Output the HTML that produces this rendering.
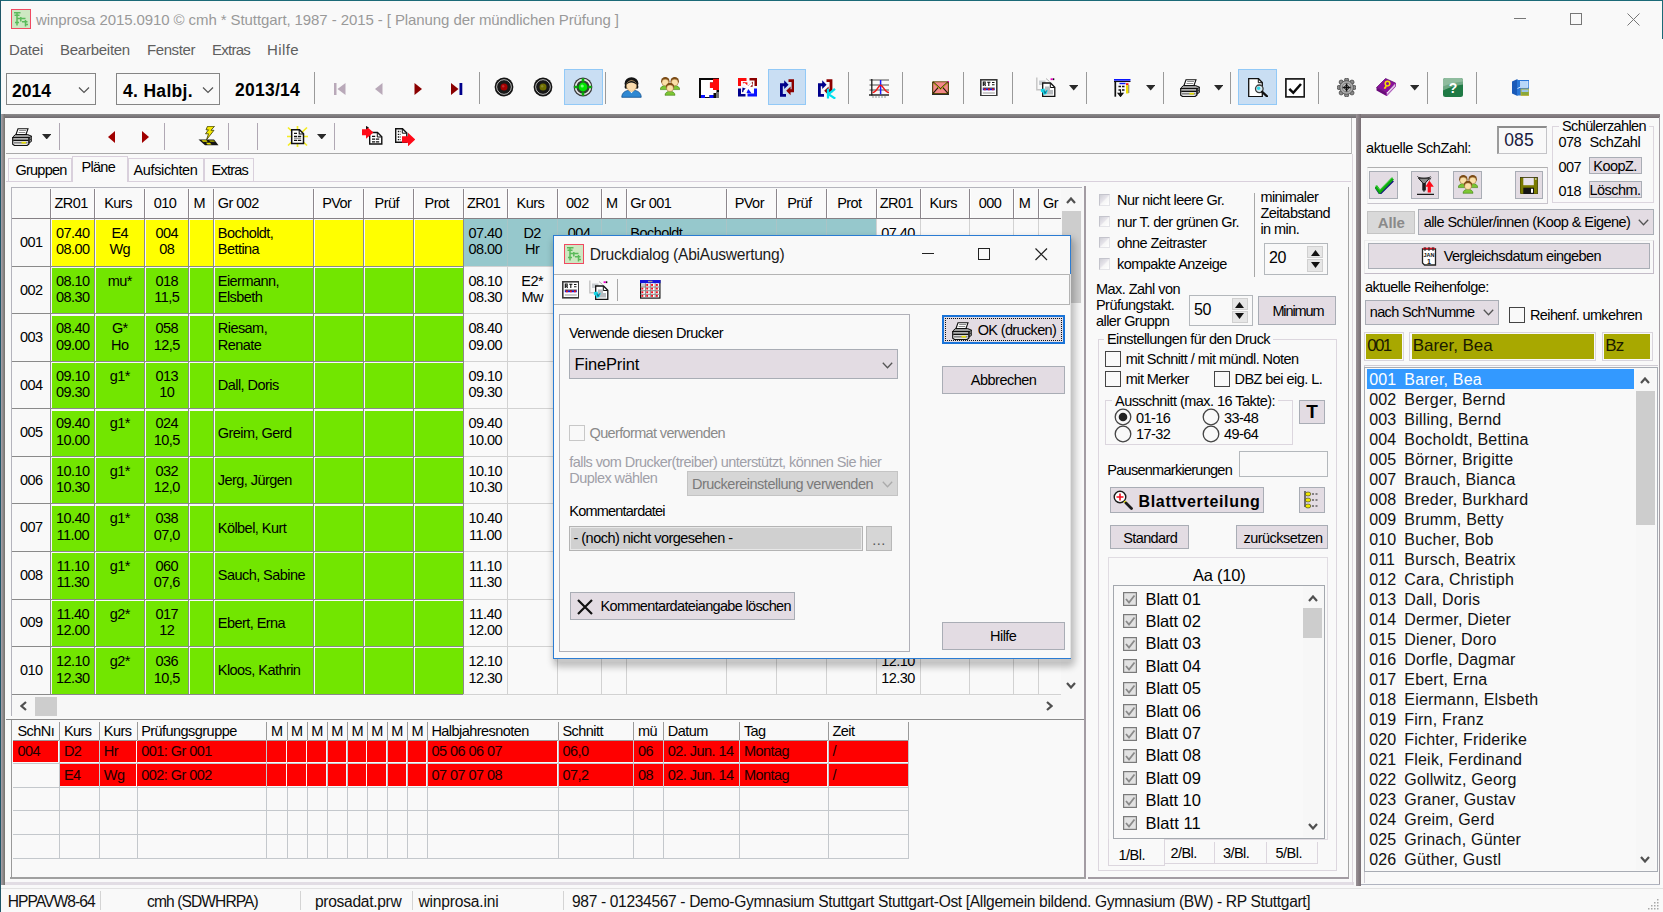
<!DOCTYPE html>
<html lang="de"><head><meta charset="utf-8"><title>winprosa</title>
<style>
html,body{margin:0;padding:0}
body{width:1663px;height:912px;overflow:hidden;background:#f9f9f9;font-family:"Liberation Sans",sans-serif;color:#000;position:relative}
#root{position:absolute;left:0;top:0;width:1663px;height:912px;overflow:hidden;background:#f9f9f9}
#root div,#root svg,#root span.a{position:absolute;box-sizing:border-box}
.t{white-space:nowrap}
.btn{background:#e3dce3;border:1px solid #a9adb5}
.sunk{border:1px solid #a0a0a0;background:#fff}
</style></head>
<body><div id="root">
<!-- chrome -->
<div style="left:0px;top:0px;width:1663px;height:1px;background:#1b6a78"></div>
<div style="left:0px;top:0px;width:1.2px;height:912px;background:#1f5668"></div>
<div style="left:1662px;top:0px;width:1px;height:39px;background:#1b6a78"></div>
<div style="left:1px;top:1px;width:1661px;height:37px;background:#f9f9f9"></div>
<svg style="left:11px;top:9px" width="20" height="20" viewBox="0 0 20 20"><rect x="0.500" y="0.500" width="19" height="19" fill="#cde8c2" stroke="#f04a62" stroke-width="1"/><path d="M3 3.800H9.500M6 3V16.500M3.500 6.200H8.500M5.500 9.500H14.500M9.800 8V12.500M11 12.800H16.500M14.500 11V17.500M4 13.500H8M14.500 15.500H17" stroke="#5aba5a" stroke-width="1.500" fill="none"/></svg>
<div class="t" style="left:36px;top:10px;font-size:15px;line-height:20px;letter-spacing:-0.09px;color:#999;">winprosa 2015.0910 © cmh * Stuttgart, 1987 - 2015 - [ Planung der mündlichen Prüfung ]</div>
<div style="left:1514px;top:18px;width:12px;height:1px;background:#777"></div>
<div style="left:1570px;top:13px;width:12px;height:12px;border:1px solid #777"></div>
<svg style="left:1626.5px;top:12.5px" width="13" height="13" viewBox="0 0 13 13"><path d="M0.500 0.500L12.500 12.500M12.500 0.500L0.500 12.500" stroke="#777" stroke-width="1" fill="none"/></svg>
<div style="left:1px;top:38px;width:1661px;height:26px;background:#f9f9f9"></div>
<div class="t" style="left:9px;top:40px;font-size:15px;line-height:20px;letter-spacing:-0.20px;color:#5f5f5f;">Datei</div>
<div class="t" style="left:60px;top:40px;font-size:15px;line-height:20px;letter-spacing:-0.26px;color:#5f5f5f;">Bearbeiten</div>
<div class="t" style="left:147px;top:40px;font-size:15px;line-height:20px;letter-spacing:-0.41px;color:#5f5f5f;">Fenster</div>
<div class="t" style="left:212px;top:40px;font-size:15px;line-height:20px;letter-spacing:-0.75px;color:#5f5f5f;">Extras</div>
<div class="t" style="left:267px;top:40px;font-size:15px;line-height:20px;letter-spacing:0.40px;color:#5f5f5f;">Hilfe</div>
<div style="left:1px;top:64px;width:1662px;height:50px;background:#f9f9f9"></div>
<div style="left:6px;top:73px;width:90px;height:32px;border:1px solid #858585;background:#f9f9f9"></div>
<div class="t" style="left:12px;top:79.5px;font-size:17.5px;line-height:23px;letter-spacing:0.02px;font-weight:bold;">2014</div>
<svg style="left:78px;top:86px" width="12" height="8" viewBox="0 0 12 8"><path d="M1 1.5L6 6.5L11 1.5" stroke="#555" stroke-width="1.2" fill="none"/></svg>
<div style="left:116px;top:73px;width:104px;height:32px;border:1px solid #858585;background:#f9f9f9"></div>
<div class="t" style="left:123px;top:79.5px;font-size:17.5px;line-height:23px;letter-spacing:0.32px;font-weight:bold;">4. Halbj.</div>
<svg style="left:202px;top:86px" width="12" height="8" viewBox="0 0 12 8"><path d="M1 1.5L6 6.5L11 1.5" stroke="#555" stroke-width="1.2" fill="none"/></svg>
<div class="t" style="left:235px;top:78.5px;font-size:17.5px;line-height:23px;letter-spacing:0.25px;font-weight:bold;">2013/14</div>
<div style="left:314px;top:72px;width:1px;height:32px;background:#9a9a9a"></div>
<div style="left:479px;top:72px;width:1px;height:32px;background:#9a9a9a"></div>
<div style="left:605px;top:72px;width:1px;height:32px;background:#9a9a9a"></div>
<div style="left:848px;top:72px;width:1px;height:32px;background:#9a9a9a"></div>
<div style="left:902px;top:72px;width:1px;height:32px;background:#9a9a9a"></div>
<div style="left:963px;top:72px;width:1px;height:32px;background:#9a9a9a"></div>
<div style="left:1012px;top:72px;width:1px;height:32px;background:#9a9a9a"></div>
<div style="left:1086px;top:72px;width:1px;height:32px;background:#9a9a9a"></div>
<div style="left:1163px;top:72px;width:1px;height:32px;background:#9a9a9a"></div>
<div style="left:1230px;top:72px;width:1px;height:32px;background:#9a9a9a"></div>
<div style="left:1318px;top:72px;width:1px;height:32px;background:#9a9a9a"></div>
<div style="left:1427px;top:72px;width:1px;height:32px;background:#9a9a9a"></div>
<div style="left:1476px;top:72px;width:1px;height:32px;background:#9a9a9a"></div>
<div style="left:564px;top:69px;width:38.7px;height:36.3px;background:#c9def3;border:1px solid #92c9f7"></div>
<div style="left:767.5px;top:69px;width:38.7px;height:36.3px;background:#c9def3;border:1px solid #92c9f7"></div>
<div style="left:1237.5px;top:69px;width:39.3px;height:36.3px;background:#c9def3;border:1px solid #92c9f7"></div>
<svg style="left:334px;top:82.5px" width="12" height="12" viewBox="0 0 12 12"><rect x="0" y="0" width="2.500" height="12" fill="#b9a9b9"/><path d="M11.500 0L3.500 6L11.500 12Z" fill="#b9a9b9"/></svg>
<svg style="left:375px;top:82.5px" width="8" height="12" viewBox="0 0 8 12"><path d="M7.500 0L0 6L7.500 12Z" fill="#b9a9b9"/></svg>
<svg style="left:414px;top:82.5px" width="8" height="12" viewBox="0 0 8 12"><path d="M0.500 0L8 6L0.500 12Z" fill="#8b0000"/></svg>
<svg style="left:451px;top:82.5px" width="12" height="12" viewBox="0 0 12 12"><path d="M0 0L7.500 6L0 12Z" fill="#8b0000"/><rect x="8.500" y="0" width="2.800" height="12" fill="#00008b"/></svg>
<svg style="left:493.3px;top:75.9px" width="22" height="22" viewBox="0 0 22 22"><circle cx="11" cy="11" r="9.400" fill="#141414"/><circle cx="11" cy="11" r="7.300" fill="none" stroke="#d0d0d0" stroke-width="0.900"/><circle cx="11" cy="11" r="6.300" fill="#181818"/><circle cx="11" cy="11" r="3.500" fill="#a40000"/><circle cx="10.200" cy="10.200" r="1.200" fill="rgba(255,255,255,0.18)"/></svg>
<svg style="left:532.2px;top:75.9px" width="22" height="22" viewBox="0 0 22 22"><circle cx="11" cy="11" r="9.400" fill="#141414"/><circle cx="11" cy="11" r="7.300" fill="none" stroke="#d0d0d0" stroke-width="0.900"/><circle cx="11" cy="11" r="6.300" fill="#181818"/><circle cx="11" cy="11" r="3.500" fill="#6e6e00"/><circle cx="10.200" cy="10.200" r="1.200" fill="rgba(255,255,255,0.18)"/></svg>
<svg style="left:572.3px;top:75.9px" width="22" height="22" viewBox="0 0 22 22"><circle cx="11" cy="11" r="9.400" fill="#3a3a3a"/><circle cx="11" cy="11" r="7.400" fill="none" stroke="#e4e4e4" stroke-width="1.700"/><path d="M11 2.500v3.500M11 16v3.500M2.500 11h3.500M16 11h3.500" stroke="#00b400" stroke-width="2.600"/><circle cx="11" cy="11" r="5.600" fill="#2a4a2a"/><circle cx="11" cy="11" r="4.400" fill="#00e600"/><circle cx="10.200" cy="10" r="1.600" fill="#7aff7a"/></svg>
<svg style="left:620.5px;top:77px" width="21" height="21" viewBox="0 0 21 21"><path d="M0.800 20.300C0.800 15.500 4.500 13.800 8 13.200L10.500 15.500L13 13.200C16.500 13.800 20.200 15.500 20.200 20.300Z" fill="#2f88d2" stroke="#0f4f8f" stroke-width="0.800"/><path d="M7.800 13.200L10.500 16.300L13.200 13.200L11.800 12.500H9.200Z" fill="#fff"/><ellipse cx="10.500" cy="6.600" rx="6.900" ry="6.400" fill="#141414"/><path d="M3.800 8.500C3 12 5 12.300 6 11.300L15 11.300C16 12.300 18 12 17.200 8.500Z" fill="#141414"/><ellipse cx="10.500" cy="8.900" rx="5" ry="5.500" fill="#fbdcae" stroke="#c99a5a" stroke-width="0.500"/><path d="M5.300 8C7 4.800 13 4.300 15.700 8C14.500 2.500 6.500 2.500 5.300 8Z" fill="#141414"/></svg>
<svg style="left:660px;top:77.4px" width="20" height="18.6" viewBox="0 0 20 18.6"><path d="M0.3 12.6C0.3 7.2 10.3 7.2 10.3 12.6Z" fill="#7cc634" stroke="#3f7f14" stroke-width="0.600"/><circle cx="5.3" cy="4.3" r="4.2" fill="#7a4a14"/><ellipse cx="5.3" cy="5.5" rx="3.4" ry="3.3" fill="#fbe0a8" stroke="#a8743a" stroke-width="0.400"/><path d="M9.7 12.6C9.7 7.2 19.7 7.2 19.7 12.6Z" fill="#7cc634" stroke="#3f7f14" stroke-width="0.600"/><circle cx="14.7" cy="4.3" r="4.2" fill="#7a4a14"/><ellipse cx="14.7" cy="5.5" rx="3.4" ry="3.3" fill="#fbe0a8" stroke="#a8743a" stroke-width="0.400"/><path d="M5 18.3C5 12.9 15 12.9 15 18.3Z" fill="#7cc634" stroke="#3f7f14" stroke-width="0.600"/><circle cx="10" cy="10" r="4.2" fill="#7a4a14"/><ellipse cx="10" cy="11.2" rx="3.4" ry="3.3" fill="#fbe0a8" stroke="#a8743a" stroke-width="0.400"/></svg>
<svg style="left:699px;top:78px" width="20" height="20" viewBox="0 0 20 20"><rect x="0" y="0" width="20" height="20" fill="#0a0a0a"/><path d="M2 2H14V4.600H11V9.900H14V12H17.500V15H14.500V17H10.500V19H6V17H2Z" fill="#fff"/><path d="M14 0.800H20V12H14V9.900H10.900V4.600H14Z" fill="#ff0a0a"/><rect x="2" y="17" width="4" height="3" fill="#0a14ff"/><rect x="10.500" y="17" width="4" height="3" fill="#0a14ff"/><rect x="17" y="14" width="3" height="6" fill="#707070"/></svg>
<svg style="left:737.5px;top:78px" width="19" height="18.5" viewBox="0 0 19 18.5"><path d="M0 0H8.500V3H3V8H0Z" fill="#ff0a0a"/><path d="M19 0H11.500V2.500H16.500V8H19Z" fill="#8b0000"/><path d="M0 18.500H7.500V16H3V10.500H0Z" fill="#00008b"/><path d="M19 18.500H9.500V15.500H16V10.500H19Z" fill="#0a14ff"/><path d="M4.500 4L9.500 4.500L9 9.500Z" fill="#ff0a0a"/><path d="M15 3.500L14.500 9L10 8Z" fill="#8b0000"/><path d="M4 14.500L4.500 9.500L9 11Z" fill="#00008b"/><path d="M13.500 15.500L8.500 15L10.500 10.500Z" fill="#0a14ff"/><path d="M6 5.500L14 13.500M14 5.500L6 13.500" stroke="#fff" stroke-width="1.800"/></svg>
<svg style="left:780px;top:78.6px" width="14.4" height="18" viewBox="0 0 14.4 18"><path d="M0 4.200H4.200V1.300L8.600 5.700L4.200 10.100V7.200H2.800V15H6V17.800H0Z" fill="#00008b"/><path d="M14.400 13.300H10.600V16.200L6.200 11.800L10.600 7.400V10.300H11.600V3H8.500V0.300H14.400Z" fill="#8b0000"/></svg>
<svg style="left:817.5px;top:78.6px" width="18" height="20" viewBox="0 0 18 20"><path d="M0 4.200H4.200V1.300L8.600 5.700L4.200 10.100V7.200H2.800V15H6V17.800H0Z" fill="#00008b"/><path d="M14.400 13.300H10.600V16.200L6.200 11.800L10.600 7.400V10.300H11.600V3H8.500V0.300H14.400Z" fill="#8b0000"/><path d="M10 9.800V19.600M17 9.800L10.500 15.200L17.300 19.600" stroke="#00e0f0" stroke-width="2.300" fill="none"/></svg>
<svg style="left:868.5px;top:78.5px" width="20.5" height="19.5" viewBox="0 0 20.5 19.5"><path d="M0.500 1H20M0.500 6H20M0.500 11H20" stroke="#3a3a3a" stroke-width="0.900"/><path d="M0 16H20" stroke="#1a1a1a" stroke-width="1.400"/><path d="M2.800 0V16.500" stroke="#1a1a1a" stroke-width="1.300"/><path d="M3.500 18h1M6.500 18h1M9.500 18h1M12.500 18h1M15.500 18h1" stroke="#777" stroke-width="1.400"/><path d="M11.600 1V15.300" stroke="#1a1aff" stroke-width="1.500"/><path d="M3.500 13.500C8 13.500 9 6.300 11.600 6.300S15.500 13.500 20 13.500" stroke="#f01818" stroke-width="1.500" fill="none"/></svg>
<svg style="left:931.6px;top:80.9px" width="17.5" height="14.3" viewBox="0 0 17.5 14.3"><rect x="0" y="1" width="17.500" height="13.300" fill="#2a2a2a"/><rect x="0.800" y="0.800" width="15.500" height="11.700" fill="#f48888" stroke="#5a4a00" stroke-width="0.900"/><path d="M1 1L8.500 8L16 1M1 12.300L6.500 6.200M16 12.300L10.500 6.200" stroke="#1a1a00" stroke-width="1.100" fill="none"/><path d="M1.500 0.800L8.500 7.200L15.500 0.800" stroke="#f0f000" stroke-width="0.700" fill="none" transform="translate(0,1.100)"/><rect x="15.800" y="0" width="1.200" height="1.200" fill="#f000c8"/></svg>
<svg style="left:980.2px;top:78.9px" width="17.6" height="17.6" viewBox="0 0 17.6 17.6"><rect x="0.800" y="0.800" width="16" height="16" fill="#fff" stroke="#3a3a3a" stroke-width="1.600"/><path d="M3.300 7V3H5.200V5H3.300M4.600 5L5.500 7M7.200 3.200H10.400M8.800 3.200V7M12 3.500H14.500M12 5.800H14.500" stroke="#111" stroke-width="1.100" fill="none"/><path d="M2.800 10.300H14.800" stroke="#1414e0" stroke-width="1.900"/><path d="M4 10.300h1.800M8 10.300h1.800M12 10.300h1.800" stroke="#f01414" stroke-width="1.900"/><path d="M2.800 9H14.800" stroke="#111" stroke-width="0.700"/><path d="M2.800 14H14.800" stroke="#9a9a9a" stroke-width="1"/></svg>
<svg style="left:1036px;top:77.3px" width="20" height="20.5" viewBox="0 0 20 20.5"><path d="M0.800 0.500V12.800H6" stroke="#c4c4c4" stroke-width="1.400" fill="none"/><path d="M3 3.500H9.500V8H3Z" fill="#c8ccd0"/><path d="M6.700 6H14.500L18.800 10.300V19.300H6.700Z" fill="#fff" stroke="#111" stroke-width="1.300"/><path d="M14.300 6.200V10.500H18.600" fill="none" stroke="#111" stroke-width="1"/><path d="M9 9.500H14V13H17V17.500H9Z" fill="#b8bcc0"/><path d="M5 12L8.500 11.500L9.500 14.500L12 12.500L10.500 17L7.500 18L6.500 15.500L4.800 14.500Z" fill="#18d8e8"/><path d="M8 13.500L9 16.500L10.500 13.500" stroke="#0a5a7a" stroke-width="0.800" fill="none"/><rect x="14.600" y="1.300" width="2.200" height="1.800" fill="#f000c8"/><rect x="16.900" y="1.300" width="1.400" height="1.800" fill="#111"/><path d="M10 1.500L13.500 4.500" stroke="#b0b0b0" stroke-width="1"/></svg>
<svg style="left:1068.7px;top:85.2px" width="9.4" height="5.4" viewBox="0 0 9.4 5.4"><path d="M0 0H9.400L4.700 5.400Z" fill="#2a2a2a"/></svg>
<svg style="left:1113.5px;top:79px" width="17" height="17.8" viewBox="0 0 17 17.8"><rect x="0" y="0" width="16.500" height="1.700" fill="#0a14ff"/><path d="M0 2.500H16.500" stroke="#111" stroke-width="1.100"/><path d="M1.300 2V17.700" stroke="#111" stroke-width="1.700"/><rect x="5.500" y="3.800" width="6" height="1.400" fill="#0a14ff"/><rect x="12" y="4.200" width="2.500" height="2" fill="#f01414"/><rect x="12" y="6.200" width="2.500" height="8.300" fill="#f0e000"/><path d="M14.800 6V14" stroke="#555" stroke-width="0.700"/><path d="M4.500 7.500H10.500M4.500 11H10.500" stroke="#111" stroke-width="1.500" stroke-dasharray="2.500 1"/><path d="M6.500 11V16.500M4 14.200L6.500 17.400L9 14.200Z" stroke="#111" stroke-width="1.100" fill="#111"/></svg>
<svg style="left:1146px;top:85.2px" width="9.4" height="5.4" viewBox="0 0 9.4 5.4"><path d="M0 0H9.400L4.700 5.400Z" fill="#2a2a2a"/></svg>
<svg style="left:1179.8px;top:79px" width="20.5" height="18" viewBox="0 0 20.5 18"><path d="M6 0.700H16L14 6.500H4Z" fill="#fff" stroke="#111" stroke-width="1.100"/><path d="M7.200 2.500H14M6.500 4.500H13.300" stroke="#8a8a8a" stroke-width="1"/><path d="M3.500 6.500H15.500L19.800 8.300V13L17 15.200V9.800H0.800V9Z" fill="#9a9a9a" stroke="#111" stroke-width="1"/><path d="M0.700 9.600H16.800V16.300L15 17.500H2.500L0.700 16.300Z" fill="#e4e4e4" stroke="#111" stroke-width="1.200"/><path d="M1.200 12.300H16.500" stroke="#111" stroke-width="1.500"/><path d="M2 14.800H15.500" stroke="#7a7a7a" stroke-width="1.400"/><rect x="9.500" y="13.900" width="4.500" height="1.600" fill="#e8e000"/><path d="M17 9.800L19.800 8.300" stroke="#111" stroke-width="0.900"/><circle cx="18.300" cy="11.300" r="0.900" fill="#3a3a3a"/></svg>
<svg style="left:1213.5px;top:85.2px" width="9.4" height="5.4" viewBox="0 0 9.4 5.4"><path d="M0 0H9.400L4.700 5.400Z" fill="#2a2a2a"/></svg>
<svg style="left:1248px;top:77.6px" width="20" height="19.5" viewBox="0 0 20 19.5"><path d="M0.700 0.700H10.500L14.300 4.500V18.600H0.700Z" fill="#fff" stroke="#111" stroke-width="1.300"/><path d="M10.300 0.900V4.700H14.100" fill="none" stroke="#111" stroke-width="1"/><circle cx="11.300" cy="10.800" r="3.800" fill="#d8e8f0" stroke="#3a3a3a" stroke-width="1.300"/><circle cx="10.600" cy="10.300" r="1.700" fill="#30d8e8"/><path d="M14.200 13.800L19 18.300" stroke="#111" stroke-width="2.300" stroke-linecap="round"/></svg>
<svg style="left:1285.2px;top:77.9px" width="20.2" height="19.8" viewBox="0 0 20.2 19.8"><rect x="0.900" y="0.900" width="18.400" height="18" fill="#fff" stroke="#1a1a1a" stroke-width="1.700"/><path d="M4.300 10.800L8.300 14.800L16 6" stroke="#0a0a0a" stroke-width="2.500" fill="none"/></svg>
<svg style="left:1336.6px;top:77.9px" width="19.2" height="19" viewBox="0 0 19.2 19"><circle cx="17.20" cy="9.50" r="2.100" fill="#8a8a8a" stroke="#3a3a3a" stroke-width="0.700"/><circle cx="14.97" cy="14.87" r="2.100" fill="#8a8a8a" stroke="#3a3a3a" stroke-width="0.700"/><circle cx="9.60" cy="17.10" r="2.100" fill="#8a8a8a" stroke="#3a3a3a" stroke-width="0.700"/><circle cx="4.23" cy="14.87" r="2.100" fill="#8a8a8a" stroke="#3a3a3a" stroke-width="0.700"/><circle cx="2.00" cy="9.50" r="2.100" fill="#8a8a8a" stroke="#3a3a3a" stroke-width="0.700"/><circle cx="4.23" cy="4.13" r="2.100" fill="#8a8a8a" stroke="#3a3a3a" stroke-width="0.700"/><circle cx="9.60" cy="1.90" r="2.100" fill="#8a8a8a" stroke="#3a3a3a" stroke-width="0.700"/><circle cx="14.97" cy="4.13" r="2.100" fill="#8a8a8a" stroke="#3a3a3a" stroke-width="0.700"/><circle cx="9.600" cy="9.500" r="6.800" fill="#a8a8a8" stroke="#4a4a4a" stroke-width="0.800"/><circle cx="9.600" cy="9.500" r="4.300" fill="#c4c4c4" stroke="#6a6a6a" stroke-width="0.700"/><path d="M9.600 5.500V13.500M5.600 9.500H13.600" stroke="#111" stroke-width="1.500"/><circle cx="9.600" cy="9.500" r="2.200" fill="none" stroke="#111" stroke-width="0.800"/></svg>
<svg style="left:1376.3px;top:78px" width="20" height="18.5" viewBox="0 0 20 18.5"><path d="M0.500 9.500L9.500 0.500L19.500 5L10.500 14.500Z" fill="#8a109a" stroke="#5a0a6a" stroke-width="0.700"/><path d="M0.500 9.500V12.500L10.500 18V14.500Z" fill="#6a0a7a"/><path d="M10.500 14.500V18L19.500 8.500V5Z" fill="#f4f0f4" stroke="#8a109a" stroke-width="0.800"/><path d="M11 16L19.300 7M11 17.200L19.300 8" stroke="#b060c0" stroke-width="0.500"/><circle cx="11.500" cy="5.600" r="2.300" fill="none" stroke="#f8e000" stroke-width="1.500"/><path d="M10.400 7.600L8.200 10.600M9 9.400L10.200 10.200" stroke="#f8e000" stroke-width="1.400"/></svg>
<svg style="left:1409.9px;top:85.2px" width="9.4" height="5.4" viewBox="0 0 9.4 5.4"><path d="M0 0H9.400L4.700 5.400Z" fill="#2a2a2a"/></svg>
<svg style="left:1443px;top:78px" width="20" height="19" viewBox="0 0 20 19"><rect x="0" y="0" width="20" height="19" rx="2.500" fill="#1f7a45"/><path d="M2.500 0H17.500A2.500 2.500 0 0 1 20 2.500V6.500C12 7.500 6 9.500 0 12.500V2.500A2.500 2.500 0 0 1 2.500 0Z" fill="#6fa884"/><path d="M2.500 0H17.500A2.500 2.500 0 0 1 20 2.500V3.500C12 4.500 6 6 0 8.500V2.500A2.500 2.500 0 0 1 2.500 0Z" fill="#8fbc9e"/><text x="10" y="15" font-family="Liberation Sans,sans-serif" font-weight="bold" font-size="14" text-anchor="middle" fill="#fff">?</text></svg>
<svg style="left:1511.8px;top:79px" width="17.5" height="17" viewBox="0 0 17.5 17"><path d="M0 2.500L5.500 0V17L0 14.500Z" fill="#1a5ab8"/><rect x="5" y="1" width="12.500" height="15.500" fill="#2a78d8"/><rect x="8.500" y="2.500" width="7.500" height="6" fill="#b8d8f8" stroke="#e8f0ff" stroke-width="0.600"/><path d="M5.500 9.500L8.500 8" stroke="#cfe4ff" stroke-width="1"/><rect x="9" y="10" width="8" height="6.500" fill="#8aa83a" stroke="#d0b828" stroke-width="0.700"/><rect x="9.500" y="10.500" width="7" height="2.500" fill="#9cc4e8"/></svg>
<!-- child -->
<div style="left:2px;top:114px;width:1354px;height:4px;background:linear-gradient(#8c8c8c,#6e6a6e)"></div>
<div style="left:1.3px;top:114px;width:3.5px;height:770.5px;background:linear-gradient(90deg,#aaa2aa,#74726c)"></div>
<div style="left:5.5px;top:118px;width:1348px;height:760px;background:#f9f9f9"></div>
<div style="left:5.5px;top:153px;width:1346px;height:1px;background:#a8a8a8"></div>
<div style="left:1351px;top:118px;width:1px;height:36px;background:#b8b8b8"></div>
<svg style="left:11.8px;top:127.5px" width="20.5" height="18" viewBox="0 0 20.5 18"><path d="M6 0.700H16L14 6.500H4Z" fill="#fff" stroke="#111" stroke-width="1.100"/><path d="M7.200 2.500H14M6.500 4.500H13.300" stroke="#8a8a8a" stroke-width="1"/><path d="M3.500 6.500H15.500L19.800 8.300V13L17 15.200V9.800H0.800V9Z" fill="#9a9a9a" stroke="#111" stroke-width="1"/><path d="M0.700 9.600H16.800V16.300L15 17.500H2.500L0.700 16.300Z" fill="#e4e4e4" stroke="#111" stroke-width="1.200"/><path d="M1.200 12.300H16.500" stroke="#111" stroke-width="1.500"/><path d="M2 14.800H15.500" stroke="#7a7a7a" stroke-width="1.400"/><rect x="9.500" y="13.900" width="4.500" height="1.600" fill="#e8e000"/><path d="M17 9.800L19.800 8.300" stroke="#111" stroke-width="0.900"/><circle cx="18.300" cy="11.300" r="0.900" fill="#3a3a3a"/></svg>
<svg style="left:42px;top:134.1px" width="9.4" height="5.4" viewBox="0 0 9.4 5.4"><path d="M0 0H9.400L4.700 5.400Z" fill="#2a2a2a"/></svg>
<div style="left:59px;top:123px;width:1px;height:27px;background:#b0a8b4"></div>
<div style="left:164px;top:123px;width:1px;height:27px;background:#b0a8b4"></div>
<div style="left:228px;top:123px;width:1px;height:27px;background:#b0a8b4"></div>
<div style="left:257px;top:123px;width:1px;height:27px;background:#b0a8b4"></div>
<div style="left:334px;top:123px;width:1px;height:27px;background:#b0a8b4"></div>
<svg style="left:108px;top:131px" width="7" height="12" viewBox="0 0 7 12"><path d="M7 0L0 6L7 12Z" fill="#a00000"/></svg>
<svg style="left:142px;top:131px" width="7" height="12" viewBox="0 0 7 12"><path d="M0 0L7 6L0 12Z" fill="#a00000"/></svg>
<svg style="left:198px;top:126.1px" width="21" height="19.7" viewBox="0 0 21 19.7"><path d="M0.500 13.500H16L20.500 19.300H7Z" fill="#141414"/><path d="M3.500 14.300H8.500L9.500 15.800H5Z" fill="#e8e000"/><path d="M11 14.300H15.500L17 16H12.500Z" fill="#8a8a00"/><path d="M8 16.800H12L13.500 18.600H9.500Z" fill="#e8e000"/><path d="M9.500 0.300H16.500L13 4.300H16L8.500 13.800L10.500 7.800H7.500L10.500 3.800H8Z" fill="#f4e800" stroke="#3a3a00" stroke-width="0.800"/></svg>
<svg style="left:287px;top:125.9px" width="21" height="21" viewBox="0 0 21 21"><path d="M1 1.500L20 19.500M20 1.500L1 19.500M10.500 0V21M0 10.500H21" stroke="#f4ec20" stroke-width="1.700"/><path d="M4.700 3.700H12.500L16.500 7.700V17.500H4.700Z" fill="#fff" stroke="#111" stroke-width="1.500"/><path d="M12.200 3.900V8H16.300" fill="none" stroke="#111" stroke-width="1.100"/><path d="M7 7.300H10M7 10.500H14.200M7 14.300H14.200" stroke="#111" stroke-width="1.300" stroke-dasharray="3.200 0.800"/><path d="M7 12.400H14.200" stroke="#9a9a9a" stroke-width="1.100"/></svg>
<svg style="left:316.9px;top:133.7px" width="9.4" height="5.4" viewBox="0 0 9.4 5.4"><path d="M0 0H9.400L4.700 5.400Z" fill="#2a2a2a"/></svg>
<svg style="left:362px;top:126.3px" width="20.6" height="18.7" viewBox="0 0 20.6 18.7"><path d="M7.700 6.500H15.500L19.800 10.800V18H7.700Z" fill="#fff" stroke="#111" stroke-width="1.400"/><path d="M15.300 6.700V11H19.600" fill="none" stroke="#111" stroke-width="1"/><path d="M10 10.300H13.500M10 13.200H17.500M10 15.800H17.500" stroke="#111" stroke-width="1.300" stroke-dasharray="3.200 0.800"/><path d="M0 3.300H4V0L11.500 6.500L4 12.800V9.300H0Z" fill="#ff0a18"/><path d="M4 0L7 1.500L4 3.300Z" fill="#111"/></svg>
<svg style="left:394.9px;top:128px" width="20.3" height="18.3" viewBox="0 0 20.3 18.3"><path d="M0.700 0.700H7.500L11.800 5V14.300H0.700Z" fill="#fff" stroke="#111" stroke-width="1.400"/><path d="M7.300 0.900V5.200H11.600" fill="none" stroke="#111" stroke-width="1"/><path d="M2.800 3.500H5.500M2.800 6.300H5.500M2.800 9H5.500M2.800 11.700H5.500" stroke="#111" stroke-width="1.300" stroke-dasharray="1.500 0.700"/><path d="M7 8.300H13V4.700L20.300 11.500L13 18.300V14.700H7Z" fill="#ff0a18"/></svg>
<div style="left:6px;top:180.5px;width:1345px;height:1px;background:#d9d0dc"></div>
<div style="left:7.5px;top:157.5px;width:64.5px;height:23.5px;border:1px solid #d9d0dc;border-bottom:none;background:#f9f9f9"></div>
<div class="t" style="left:15.5px;top:161px;font-size:14.5px;line-height:19px;letter-spacing:-0.77px;">Gruppen</div>
<div style="left:128px;top:157.5px;width:75.5px;height:23.5px;border:1px solid #d9d0dc;border-bottom:none;background:#f9f9f9"></div>
<div class="t" style="left:133.5px;top:161px;font-size:14.5px;line-height:19px;letter-spacing:-0.37px;">Aufsichten</div>
<div style="left:203.5px;top:157.5px;width:50px;height:23.5px;border:1px solid #d9d0dc;border-bottom:none;background:#f9f9f9"></div>
<div class="t" style="left:211.5px;top:161px;font-size:14.5px;line-height:19px;letter-spacing:-0.76px;">Extras</div>
<div style="left:71.5px;top:155.5px;width:56.5px;height:26px;border:1px solid #d9d0dc;border-bottom:none;background:#f9f9f9"></div>
<div class="t" style="left:81.5px;top:158px;font-size:14.5px;line-height:19px;letter-spacing:-0.72px;">Pläne</div>
<div style="left:1083.5px;top:185.7px;width:2px;height:693px;background:#a39ca3"></div>
<div style="left:10px;top:877px;width:1075px;height:1.6px;background:#a0a0a0"></div>
<!-- grid -->
<div style="left:12px;top:187.5px;width:1070px;height:529px;background:#f9f9f9"></div>
<div style="left:11.5px;top:187px;width:1070px;height:1px;background:#b4b4bc"></div>
<div style="left:11.3px;top:187px;width:1px;height:529px;background:#b4b4bc"></div>
<div style="left:13px;top:188.5px;width:1048px;height:30px;background:#f9f9f9"></div>
<div style="left:50px;top:188.5px;width:1px;height:29.5px;background:#8c868c"></div>
<div style="left:51px;top:188.5px;width:1px;height:29.5px;background:#fff"></div>
<div class="t" style="left:50.4px;top:193.9px;font-size:14.5px;line-height:19px;letter-spacing:-0.55px;width:41.4px;text-align:center;">ZR01</div>
<div style="left:94px;top:188.5px;width:1px;height:29.5px;background:#8c868c"></div>
<div style="left:95px;top:188.5px;width:1px;height:29.5px;background:#fff"></div>
<div class="t" style="left:94.3px;top:193.9px;font-size:14.5px;line-height:19px;letter-spacing:-0.55px;width:47.5px;text-align:center;">Kurs</div>
<div style="left:144px;top:188.5px;width:1px;height:29.5px;background:#8c868c"></div>
<div style="left:145px;top:188.5px;width:1px;height:29.5px;background:#fff"></div>
<div class="t" style="left:144.3px;top:193.9px;font-size:14.5px;line-height:19px;letter-spacing:-0.55px;width:41.4px;text-align:center;">010</div>
<div style="left:188px;top:188.5px;width:1px;height:29.5px;background:#8c868c"></div>
<div style="left:189px;top:188.5px;width:1px;height:29.5px;background:#fff"></div>
<div class="t" style="left:188.2px;top:193.9px;font-size:14.5px;line-height:19px;letter-spacing:-0.55px;width:22.3px;text-align:center;">M</div>
<div style="left:213px;top:188.5px;width:1px;height:29.5px;background:#8c868c"></div>
<div style="left:214px;top:188.5px;width:1px;height:29.5px;background:#fff"></div>
<div class="t" style="left:217.8px;top:193.9px;font-size:14.5px;line-height:19px;letter-spacing:-0.55px;">Gr 002</div>
<div style="left:313px;top:188.5px;width:1px;height:29.5px;background:#8c868c"></div>
<div style="left:314px;top:188.5px;width:1px;height:29.5px;background:#fff"></div>
<div class="t" style="left:313px;top:193.9px;font-size:14.5px;line-height:19px;letter-spacing:-0.55px;width:47.5px;text-align:center;">PVor</div>
<div style="left:363px;top:188.5px;width:1px;height:29.5px;background:#8c868c"></div>
<div style="left:364px;top:188.5px;width:1px;height:29.5px;background:#fff"></div>
<div class="t" style="left:363px;top:193.9px;font-size:14.5px;line-height:19px;letter-spacing:-0.55px;width:47.5px;text-align:center;">Prüf</div>
<div style="left:413px;top:188.5px;width:1px;height:29.5px;background:#8c868c"></div>
<div style="left:414px;top:188.5px;width:1px;height:29.5px;background:#fff"></div>
<div class="t" style="left:413px;top:193.9px;font-size:14.5px;line-height:19px;letter-spacing:-0.55px;width:47.5px;text-align:center;">Prot</div>
<div style="left:463px;top:188.5px;width:1px;height:29.5px;background:#8c868c"></div>
<div style="left:464px;top:188.5px;width:1px;height:29.5px;background:#fff"></div>
<div class="t" style="left:463px;top:193.9px;font-size:14.5px;line-height:19px;letter-spacing:-0.55px;width:41.1px;text-align:center;">ZR01</div>
<div style="left:507px;top:188.5px;width:1px;height:29.5px;background:#8c868c"></div>
<div style="left:508px;top:188.5px;width:1px;height:29.5px;background:#fff"></div>
<div class="t" style="left:506.6px;top:193.9px;font-size:14.5px;line-height:19px;letter-spacing:-0.55px;width:47.6px;text-align:center;">Kurs</div>
<div style="left:557px;top:188.5px;width:1px;height:29.5px;background:#8c868c"></div>
<div style="left:558px;top:188.5px;width:1px;height:29.5px;background:#fff"></div>
<div class="t" style="left:556.7px;top:193.9px;font-size:14.5px;line-height:19px;letter-spacing:-0.55px;width:41.4px;text-align:center;">002</div>
<div style="left:601px;top:188.5px;width:1px;height:29.5px;background:#8c868c"></div>
<div style="left:602px;top:188.5px;width:1px;height:29.5px;background:#fff"></div>
<div class="t" style="left:600.6px;top:193.9px;font-size:14.5px;line-height:19px;letter-spacing:-0.55px;width:22.4px;text-align:center;">M</div>
<div style="left:626px;top:188.5px;width:1px;height:29.5px;background:#8c868c"></div>
<div style="left:627px;top:188.5px;width:1px;height:29.5px;background:#fff"></div>
<div class="t" style="left:630.3px;top:193.9px;font-size:14.5px;line-height:19px;letter-spacing:-0.55px;">Gr 001</div>
<div style="left:726px;top:188.5px;width:1px;height:29.5px;background:#8c868c"></div>
<div style="left:727px;top:188.5px;width:1px;height:29.5px;background:#fff"></div>
<div class="t" style="left:725.5px;top:193.9px;font-size:14.5px;line-height:19px;letter-spacing:-0.55px;width:47.6px;text-align:center;">PVor</div>
<div style="left:776px;top:188.5px;width:1px;height:29.5px;background:#8c868c"></div>
<div style="left:777px;top:188.5px;width:1px;height:29.5px;background:#fff"></div>
<div class="t" style="left:775.6px;top:193.9px;font-size:14.5px;line-height:19px;letter-spacing:-0.55px;width:47.5px;text-align:center;">Prüf</div>
<div style="left:826px;top:188.5px;width:1px;height:29.5px;background:#8c868c"></div>
<div style="left:827px;top:188.5px;width:1px;height:29.5px;background:#fff"></div>
<div class="t" style="left:825.6px;top:193.9px;font-size:14.5px;line-height:19px;letter-spacing:-0.55px;width:47.6px;text-align:center;">Prot</div>
<div style="left:876px;top:188.5px;width:1px;height:29.5px;background:#8c868c"></div>
<div style="left:877px;top:188.5px;width:1px;height:29.5px;background:#fff"></div>
<div class="t" style="left:875.7px;top:193.9px;font-size:14.5px;line-height:19px;letter-spacing:-0.55px;width:41.3px;text-align:center;">ZR01</div>
<div style="left:920px;top:188.5px;width:1px;height:29.5px;background:#8c868c"></div>
<div style="left:921px;top:188.5px;width:1px;height:29.5px;background:#fff"></div>
<div class="t" style="left:919.5px;top:193.9px;font-size:14.5px;line-height:19px;letter-spacing:-0.55px;width:47.4px;text-align:center;">Kurs</div>
<div style="left:969px;top:188.5px;width:1px;height:29.5px;background:#8c868c"></div>
<div style="left:970px;top:188.5px;width:1px;height:29.5px;background:#fff"></div>
<div class="t" style="left:969.4px;top:193.9px;font-size:14.5px;line-height:19px;letter-spacing:-0.55px;width:41.4px;text-align:center;">000</div>
<div style="left:1013px;top:188.5px;width:1px;height:29.5px;background:#8c868c"></div>
<div style="left:1014px;top:188.5px;width:1px;height:29.5px;background:#fff"></div>
<div class="t" style="left:1013.3px;top:193.9px;font-size:14.5px;line-height:19px;letter-spacing:-0.55px;width:22.5px;text-align:center;">M</div>
<div style="left:1038px;top:188.5px;width:1px;height:29.5px;background:#8c868c"></div>
<div style="left:1039px;top:188.5px;width:1px;height:29.5px;background:#fff"></div>
<div class="t" style="left:1043.1px;top:193.9px;font-size:14.5px;line-height:19px;letter-spacing:-0.55px;">Gr</div>
<div style="left:12px;top:217.7px;width:1049px;height:1.3px;background:#858085"></div>
<div style="left:463px;top:265.66px;width:598px;height:1px;background:#d2d2d2"></div>
<div style="left:463px;top:313.22px;width:598px;height:1px;background:#d2d2d2"></div>
<div style="left:463px;top:360.78px;width:598px;height:1px;background:#d2d2d2"></div>
<div style="left:463px;top:408.34px;width:598px;height:1px;background:#d2d2d2"></div>
<div style="left:463px;top:455.9px;width:598px;height:1px;background:#d2d2d2"></div>
<div style="left:463px;top:503.46px;width:598px;height:1px;background:#d2d2d2"></div>
<div style="left:463px;top:551.02px;width:598px;height:1px;background:#d2d2d2"></div>
<div style="left:463px;top:598.58px;width:598px;height:1px;background:#d2d2d2"></div>
<div style="left:463px;top:646.14px;width:598px;height:1px;background:#d2d2d2"></div>
<div style="left:463px;top:693.7px;width:598px;height:1px;background:#d2d2d2"></div>
<div style="left:506.6px;top:218.6px;width:1px;height:475.6px;background:#d2d2d2"></div>
<div style="left:556.7px;top:218.6px;width:1px;height:475.6px;background:#d2d2d2"></div>
<div style="left:600.6px;top:218.6px;width:1px;height:475.6px;background:#d2d2d2"></div>
<div style="left:625.5px;top:218.6px;width:1px;height:475.6px;background:#d2d2d2"></div>
<div style="left:725.5px;top:218.6px;width:1px;height:475.6px;background:#d2d2d2"></div>
<div style="left:775.6px;top:218.6px;width:1px;height:475.6px;background:#d2d2d2"></div>
<div style="left:825.6px;top:218.6px;width:1px;height:475.6px;background:#d2d2d2"></div>
<div style="left:875.7px;top:218.6px;width:1px;height:475.6px;background:#d2d2d2"></div>
<div style="left:919.5px;top:218.6px;width:1px;height:475.6px;background:#d2d2d2"></div>
<div style="left:969.4px;top:218.6px;width:1px;height:475.6px;background:#d2d2d2"></div>
<div style="left:1013.3px;top:218.6px;width:1px;height:475.6px;background:#d2d2d2"></div>
<div style="left:1038.3px;top:218.6px;width:1px;height:475.6px;background:#d2d2d2"></div>
<div class="t" style="left:12px;top:232.98px;font-size:14.5px;line-height:19px;letter-spacing:-0.55px;width:38.4px;text-align:center;">001</div>
<div style="left:12px;top:265.66px;width:451px;height:1px;background:#8a8a8a"></div>
<div style="left:52.4px;top:220.4px;width:41.9px;height:45.26px;background:#ffff00"></div>
<div style="left:96.3px;top:220.4px;width:48px;height:45.26px;background:#ffff00"></div>
<div style="left:146.3px;top:220.4px;width:41.9px;height:45.26px;background:#ffff00"></div>
<div style="left:190.2px;top:220.4px;width:22.8px;height:45.26px;background:#ffff00"></div>
<div style="left:215px;top:220.4px;width:98px;height:45.26px;background:#ffff00"></div>
<div style="left:315px;top:220.4px;width:48px;height:45.26px;background:#ffff00"></div>
<div style="left:365px;top:220.4px;width:48px;height:45.26px;background:#ffff00"></div>
<div style="left:415px;top:220.4px;width:48px;height:45.26px;background:#ffff00"></div>
<div class="t" style="left:50.4px;top:224.08px;font-size:14.5px;line-height:19px;letter-spacing:-0.55px;width:44.9px;text-align:center;">07.40</div>
<div class="t" style="left:50.4px;top:240.48px;font-size:14.5px;line-height:19px;letter-spacing:-0.55px;width:44.9px;text-align:center;">08.00</div>
<div class="t" style="left:94.3px;top:224.08px;font-size:14.5px;line-height:19px;letter-spacing:-0.55px;width:51px;text-align:center;">E4</div>
<div class="t" style="left:94.3px;top:240.48px;font-size:14.5px;line-height:19px;letter-spacing:-0.55px;width:51px;text-align:center;">Wg</div>
<div class="t" style="left:144.3px;top:224.08px;font-size:14.5px;line-height:19px;letter-spacing:-0.55px;width:44.9px;text-align:center;">004</div>
<div class="t" style="left:144.3px;top:240.48px;font-size:14.5px;line-height:19px;letter-spacing:-0.55px;width:44.9px;text-align:center;">08</div>
<div class="t" style="left:217.8px;top:224.08px;font-size:14.5px;line-height:19px;letter-spacing:-0.55px;">Bocholdt,</div>
<div class="t" style="left:217.8px;top:240.48px;font-size:14.5px;line-height:19px;letter-spacing:-0.55px;">Bettina</div>
<div class="t" style="left:463px;top:224.08px;font-size:14.5px;line-height:19px;letter-spacing:-0.55px;width:44.6px;text-align:center;">07.40</div>
<div class="t" style="left:463px;top:240.48px;font-size:14.5px;line-height:19px;letter-spacing:-0.55px;width:44.6px;text-align:center;">08.00</div>
<div class="t" style="left:875.7px;top:224.08px;font-size:14.5px;line-height:19px;letter-spacing:-0.55px;width:44.8px;text-align:center;">07.40</div>
<div class="t" style="left:875.7px;top:240.48px;font-size:14.5px;line-height:19px;letter-spacing:-0.55px;width:44.8px;text-align:center;">08.00</div>
<div class="t" style="left:12px;top:280.54px;font-size:14.5px;line-height:19px;letter-spacing:-0.55px;width:38.4px;text-align:center;">002</div>
<div style="left:12px;top:313.22px;width:451px;height:1px;background:#8a8a8a"></div>
<div style="left:52.4px;top:267.96px;width:41.9px;height:45.26px;background:#72e600"></div>
<div style="left:96.3px;top:267.96px;width:48px;height:45.26px;background:#72e600"></div>
<div style="left:146.3px;top:267.96px;width:41.9px;height:45.26px;background:#72e600"></div>
<div style="left:190.2px;top:267.96px;width:22.8px;height:45.26px;background:#72e600"></div>
<div style="left:215px;top:267.96px;width:98px;height:45.26px;background:#72e600"></div>
<div style="left:315px;top:267.96px;width:48px;height:45.26px;background:#72e600"></div>
<div style="left:365px;top:267.96px;width:48px;height:45.26px;background:#72e600"></div>
<div style="left:415px;top:267.96px;width:48px;height:45.26px;background:#72e600"></div>
<div class="t" style="left:50.4px;top:271.64px;font-size:14.5px;line-height:19px;letter-spacing:-0.55px;width:44.9px;text-align:center;">08.10</div>
<div class="t" style="left:50.4px;top:288.04px;font-size:14.5px;line-height:19px;letter-spacing:-0.55px;width:44.9px;text-align:center;">08.30</div>
<div class="t" style="left:94.3px;top:271.64px;font-size:14.5px;line-height:19px;letter-spacing:-0.55px;width:51px;text-align:center;">mu*</div>
<div class="t" style="left:144.3px;top:271.64px;font-size:14.5px;line-height:19px;letter-spacing:-0.55px;width:44.9px;text-align:center;">018</div>
<div class="t" style="left:144.3px;top:288.04px;font-size:14.5px;line-height:19px;letter-spacing:-0.55px;width:44.9px;text-align:center;">11,5</div>
<div class="t" style="left:217.8px;top:271.64px;font-size:14.5px;line-height:19px;letter-spacing:-0.55px;">Eiermann,</div>
<div class="t" style="left:217.8px;top:288.04px;font-size:14.5px;line-height:19px;letter-spacing:-0.55px;">Elsbeth</div>
<div class="t" style="left:463px;top:271.64px;font-size:14.5px;line-height:19px;letter-spacing:-0.55px;width:44.6px;text-align:center;">08.10</div>
<div class="t" style="left:463px;top:288.04px;font-size:14.5px;line-height:19px;letter-spacing:-0.55px;width:44.6px;text-align:center;">08.30</div>
<div class="t" style="left:875.7px;top:271.64px;font-size:14.5px;line-height:19px;letter-spacing:-0.55px;width:44.8px;text-align:center;">08.10</div>
<div class="t" style="left:875.7px;top:288.04px;font-size:14.5px;line-height:19px;letter-spacing:-0.55px;width:44.8px;text-align:center;">08.30</div>
<div class="t" style="left:12px;top:328.1px;font-size:14.5px;line-height:19px;letter-spacing:-0.55px;width:38.4px;text-align:center;">003</div>
<div style="left:12px;top:360.78px;width:451px;height:1px;background:#8a8a8a"></div>
<div style="left:52.4px;top:315.52px;width:41.9px;height:45.26px;background:#72e600"></div>
<div style="left:96.3px;top:315.52px;width:48px;height:45.26px;background:#72e600"></div>
<div style="left:146.3px;top:315.52px;width:41.9px;height:45.26px;background:#72e600"></div>
<div style="left:190.2px;top:315.52px;width:22.8px;height:45.26px;background:#72e600"></div>
<div style="left:215px;top:315.52px;width:98px;height:45.26px;background:#72e600"></div>
<div style="left:315px;top:315.52px;width:48px;height:45.26px;background:#72e600"></div>
<div style="left:365px;top:315.52px;width:48px;height:45.26px;background:#72e600"></div>
<div style="left:415px;top:315.52px;width:48px;height:45.26px;background:#72e600"></div>
<div class="t" style="left:50.4px;top:319.2px;font-size:14.5px;line-height:19px;letter-spacing:-0.55px;width:44.9px;text-align:center;">08.40</div>
<div class="t" style="left:50.4px;top:335.6px;font-size:14.5px;line-height:19px;letter-spacing:-0.55px;width:44.9px;text-align:center;">09.00</div>
<div class="t" style="left:94.3px;top:319.2px;font-size:14.5px;line-height:19px;letter-spacing:-0.55px;width:51px;text-align:center;">G*</div>
<div class="t" style="left:94.3px;top:335.6px;font-size:14.5px;line-height:19px;letter-spacing:-0.55px;width:51px;text-align:center;">Ho</div>
<div class="t" style="left:144.3px;top:319.2px;font-size:14.5px;line-height:19px;letter-spacing:-0.55px;width:44.9px;text-align:center;">058</div>
<div class="t" style="left:144.3px;top:335.6px;font-size:14.5px;line-height:19px;letter-spacing:-0.55px;width:44.9px;text-align:center;">12,5</div>
<div class="t" style="left:217.8px;top:319.2px;font-size:14.5px;line-height:19px;letter-spacing:-0.55px;">Riesam,</div>
<div class="t" style="left:217.8px;top:335.6px;font-size:14.5px;line-height:19px;letter-spacing:-0.55px;">Renate</div>
<div class="t" style="left:463px;top:319.2px;font-size:14.5px;line-height:19px;letter-spacing:-0.55px;width:44.6px;text-align:center;">08.40</div>
<div class="t" style="left:463px;top:335.6px;font-size:14.5px;line-height:19px;letter-spacing:-0.55px;width:44.6px;text-align:center;">09.00</div>
<div class="t" style="left:875.7px;top:319.2px;font-size:14.5px;line-height:19px;letter-spacing:-0.55px;width:44.8px;text-align:center;">08.40</div>
<div class="t" style="left:875.7px;top:335.6px;font-size:14.5px;line-height:19px;letter-spacing:-0.55px;width:44.8px;text-align:center;">09.00</div>
<div class="t" style="left:12px;top:375.66px;font-size:14.5px;line-height:19px;letter-spacing:-0.55px;width:38.4px;text-align:center;">004</div>
<div style="left:12px;top:408.34px;width:451px;height:1px;background:#8a8a8a"></div>
<div style="left:52.4px;top:363.08px;width:41.9px;height:45.26px;background:#72e600"></div>
<div style="left:96.3px;top:363.08px;width:48px;height:45.26px;background:#72e600"></div>
<div style="left:146.3px;top:363.08px;width:41.9px;height:45.26px;background:#72e600"></div>
<div style="left:190.2px;top:363.08px;width:22.8px;height:45.26px;background:#72e600"></div>
<div style="left:215px;top:363.08px;width:98px;height:45.26px;background:#72e600"></div>
<div style="left:315px;top:363.08px;width:48px;height:45.26px;background:#72e600"></div>
<div style="left:365px;top:363.08px;width:48px;height:45.26px;background:#72e600"></div>
<div style="left:415px;top:363.08px;width:48px;height:45.26px;background:#72e600"></div>
<div class="t" style="left:50.4px;top:366.76px;font-size:14.5px;line-height:19px;letter-spacing:-0.55px;width:44.9px;text-align:center;">09.10</div>
<div class="t" style="left:50.4px;top:383.16px;font-size:14.5px;line-height:19px;letter-spacing:-0.55px;width:44.9px;text-align:center;">09.30</div>
<div class="t" style="left:94.3px;top:366.76px;font-size:14.5px;line-height:19px;letter-spacing:-0.55px;width:51px;text-align:center;">g1*</div>
<div class="t" style="left:144.3px;top:366.76px;font-size:14.5px;line-height:19px;letter-spacing:-0.55px;width:44.9px;text-align:center;">013</div>
<div class="t" style="left:144.3px;top:383.16px;font-size:14.5px;line-height:19px;letter-spacing:-0.55px;width:44.9px;text-align:center;">10</div>
<div class="t" style="left:217.8px;top:375.96px;font-size:14.5px;line-height:19px;letter-spacing:-0.55px;">Dall, Doris</div>
<div class="t" style="left:463px;top:366.76px;font-size:14.5px;line-height:19px;letter-spacing:-0.55px;width:44.6px;text-align:center;">09.10</div>
<div class="t" style="left:463px;top:383.16px;font-size:14.5px;line-height:19px;letter-spacing:-0.55px;width:44.6px;text-align:center;">09.30</div>
<div class="t" style="left:875.7px;top:366.76px;font-size:14.5px;line-height:19px;letter-spacing:-0.55px;width:44.8px;text-align:center;">09.10</div>
<div class="t" style="left:875.7px;top:383.16px;font-size:14.5px;line-height:19px;letter-spacing:-0.55px;width:44.8px;text-align:center;">09.30</div>
<div class="t" style="left:12px;top:423.22px;font-size:14.5px;line-height:19px;letter-spacing:-0.55px;width:38.4px;text-align:center;">005</div>
<div style="left:12px;top:455.9px;width:451px;height:1px;background:#8a8a8a"></div>
<div style="left:52.4px;top:410.64px;width:41.9px;height:45.26px;background:#72e600"></div>
<div style="left:96.3px;top:410.64px;width:48px;height:45.26px;background:#72e600"></div>
<div style="left:146.3px;top:410.64px;width:41.9px;height:45.26px;background:#72e600"></div>
<div style="left:190.2px;top:410.64px;width:22.8px;height:45.26px;background:#72e600"></div>
<div style="left:215px;top:410.64px;width:98px;height:45.26px;background:#72e600"></div>
<div style="left:315px;top:410.64px;width:48px;height:45.26px;background:#72e600"></div>
<div style="left:365px;top:410.64px;width:48px;height:45.26px;background:#72e600"></div>
<div style="left:415px;top:410.64px;width:48px;height:45.26px;background:#72e600"></div>
<div class="t" style="left:50.4px;top:414.32px;font-size:14.5px;line-height:19px;letter-spacing:-0.55px;width:44.9px;text-align:center;">09.40</div>
<div class="t" style="left:50.4px;top:430.72px;font-size:14.5px;line-height:19px;letter-spacing:-0.55px;width:44.9px;text-align:center;">10.00</div>
<div class="t" style="left:94.3px;top:414.32px;font-size:14.5px;line-height:19px;letter-spacing:-0.55px;width:51px;text-align:center;">g1*</div>
<div class="t" style="left:144.3px;top:414.32px;font-size:14.5px;line-height:19px;letter-spacing:-0.55px;width:44.9px;text-align:center;">024</div>
<div class="t" style="left:144.3px;top:430.72px;font-size:14.5px;line-height:19px;letter-spacing:-0.55px;width:44.9px;text-align:center;">10,5</div>
<div class="t" style="left:217.8px;top:423.52px;font-size:14.5px;line-height:19px;letter-spacing:-0.55px;">Greim, Gerd</div>
<div class="t" style="left:463px;top:414.32px;font-size:14.5px;line-height:19px;letter-spacing:-0.55px;width:44.6px;text-align:center;">09.40</div>
<div class="t" style="left:463px;top:430.72px;font-size:14.5px;line-height:19px;letter-spacing:-0.55px;width:44.6px;text-align:center;">10.00</div>
<div class="t" style="left:875.7px;top:414.32px;font-size:14.5px;line-height:19px;letter-spacing:-0.55px;width:44.8px;text-align:center;">09.40</div>
<div class="t" style="left:875.7px;top:430.72px;font-size:14.5px;line-height:19px;letter-spacing:-0.55px;width:44.8px;text-align:center;">10.00</div>
<div class="t" style="left:12px;top:470.78px;font-size:14.5px;line-height:19px;letter-spacing:-0.55px;width:38.4px;text-align:center;">006</div>
<div style="left:12px;top:503.46px;width:451px;height:1px;background:#8a8a8a"></div>
<div style="left:52.4px;top:458.2px;width:41.9px;height:45.26px;background:#72e600"></div>
<div style="left:96.3px;top:458.2px;width:48px;height:45.26px;background:#72e600"></div>
<div style="left:146.3px;top:458.2px;width:41.9px;height:45.26px;background:#72e600"></div>
<div style="left:190.2px;top:458.2px;width:22.8px;height:45.26px;background:#72e600"></div>
<div style="left:215px;top:458.2px;width:98px;height:45.26px;background:#72e600"></div>
<div style="left:315px;top:458.2px;width:48px;height:45.26px;background:#72e600"></div>
<div style="left:365px;top:458.2px;width:48px;height:45.26px;background:#72e600"></div>
<div style="left:415px;top:458.2px;width:48px;height:45.26px;background:#72e600"></div>
<div class="t" style="left:50.4px;top:461.88px;font-size:14.5px;line-height:19px;letter-spacing:-0.55px;width:44.9px;text-align:center;">10.10</div>
<div class="t" style="left:50.4px;top:478.28px;font-size:14.5px;line-height:19px;letter-spacing:-0.55px;width:44.9px;text-align:center;">10.30</div>
<div class="t" style="left:94.3px;top:461.88px;font-size:14.5px;line-height:19px;letter-spacing:-0.55px;width:51px;text-align:center;">g1*</div>
<div class="t" style="left:144.3px;top:461.88px;font-size:14.5px;line-height:19px;letter-spacing:-0.55px;width:44.9px;text-align:center;">032</div>
<div class="t" style="left:144.3px;top:478.28px;font-size:14.5px;line-height:19px;letter-spacing:-0.55px;width:44.9px;text-align:center;">12,0</div>
<div class="t" style="left:217.8px;top:471.08px;font-size:14.5px;line-height:19px;letter-spacing:-0.55px;">Jerg, Jürgen</div>
<div class="t" style="left:463px;top:461.88px;font-size:14.5px;line-height:19px;letter-spacing:-0.55px;width:44.6px;text-align:center;">10.10</div>
<div class="t" style="left:463px;top:478.28px;font-size:14.5px;line-height:19px;letter-spacing:-0.55px;width:44.6px;text-align:center;">10.30</div>
<div class="t" style="left:875.7px;top:461.88px;font-size:14.5px;line-height:19px;letter-spacing:-0.55px;width:44.8px;text-align:center;">10.10</div>
<div class="t" style="left:875.7px;top:478.28px;font-size:14.5px;line-height:19px;letter-spacing:-0.55px;width:44.8px;text-align:center;">10.30</div>
<div class="t" style="left:12px;top:518.34px;font-size:14.5px;line-height:19px;letter-spacing:-0.55px;width:38.4px;text-align:center;">007</div>
<div style="left:12px;top:551.02px;width:451px;height:1px;background:#8a8a8a"></div>
<div style="left:52.4px;top:505.76px;width:41.9px;height:45.26px;background:#72e600"></div>
<div style="left:96.3px;top:505.76px;width:48px;height:45.26px;background:#72e600"></div>
<div style="left:146.3px;top:505.76px;width:41.9px;height:45.26px;background:#72e600"></div>
<div style="left:190.2px;top:505.76px;width:22.8px;height:45.26px;background:#72e600"></div>
<div style="left:215px;top:505.76px;width:98px;height:45.26px;background:#72e600"></div>
<div style="left:315px;top:505.76px;width:48px;height:45.26px;background:#72e600"></div>
<div style="left:365px;top:505.76px;width:48px;height:45.26px;background:#72e600"></div>
<div style="left:415px;top:505.76px;width:48px;height:45.26px;background:#72e600"></div>
<div class="t" style="left:50.4px;top:509.44px;font-size:14.5px;line-height:19px;letter-spacing:-0.55px;width:44.9px;text-align:center;">10.40</div>
<div class="t" style="left:50.4px;top:525.84px;font-size:14.5px;line-height:19px;letter-spacing:-0.55px;width:44.9px;text-align:center;">11.00</div>
<div class="t" style="left:94.3px;top:509.44px;font-size:14.5px;line-height:19px;letter-spacing:-0.55px;width:51px;text-align:center;">g1*</div>
<div class="t" style="left:144.3px;top:509.44px;font-size:14.5px;line-height:19px;letter-spacing:-0.55px;width:44.9px;text-align:center;">038</div>
<div class="t" style="left:144.3px;top:525.84px;font-size:14.5px;line-height:19px;letter-spacing:-0.55px;width:44.9px;text-align:center;">07,0</div>
<div class="t" style="left:217.8px;top:518.64px;font-size:14.5px;line-height:19px;letter-spacing:-0.55px;">Kölbel, Kurt</div>
<div class="t" style="left:463px;top:509.44px;font-size:14.5px;line-height:19px;letter-spacing:-0.55px;width:44.6px;text-align:center;">10.40</div>
<div class="t" style="left:463px;top:525.84px;font-size:14.5px;line-height:19px;letter-spacing:-0.55px;width:44.6px;text-align:center;">11.00</div>
<div class="t" style="left:875.7px;top:509.44px;font-size:14.5px;line-height:19px;letter-spacing:-0.55px;width:44.8px;text-align:center;">10.40</div>
<div class="t" style="left:875.7px;top:525.84px;font-size:14.5px;line-height:19px;letter-spacing:-0.55px;width:44.8px;text-align:center;">11.00</div>
<div class="t" style="left:12px;top:565.9px;font-size:14.5px;line-height:19px;letter-spacing:-0.55px;width:38.4px;text-align:center;">008</div>
<div style="left:12px;top:598.58px;width:451px;height:1px;background:#8a8a8a"></div>
<div style="left:52.4px;top:553.32px;width:41.9px;height:45.26px;background:#72e600"></div>
<div style="left:96.3px;top:553.32px;width:48px;height:45.26px;background:#72e600"></div>
<div style="left:146.3px;top:553.32px;width:41.9px;height:45.26px;background:#72e600"></div>
<div style="left:190.2px;top:553.32px;width:22.8px;height:45.26px;background:#72e600"></div>
<div style="left:215px;top:553.32px;width:98px;height:45.26px;background:#72e600"></div>
<div style="left:315px;top:553.32px;width:48px;height:45.26px;background:#72e600"></div>
<div style="left:365px;top:553.32px;width:48px;height:45.26px;background:#72e600"></div>
<div style="left:415px;top:553.32px;width:48px;height:45.26px;background:#72e600"></div>
<div class="t" style="left:50.4px;top:557px;font-size:14.5px;line-height:19px;letter-spacing:-0.55px;width:44.9px;text-align:center;">11.10</div>
<div class="t" style="left:50.4px;top:573.4px;font-size:14.5px;line-height:19px;letter-spacing:-0.55px;width:44.9px;text-align:center;">11.30</div>
<div class="t" style="left:94.3px;top:557px;font-size:14.5px;line-height:19px;letter-spacing:-0.55px;width:51px;text-align:center;">g1*</div>
<div class="t" style="left:144.3px;top:557px;font-size:14.5px;line-height:19px;letter-spacing:-0.55px;width:44.9px;text-align:center;">060</div>
<div class="t" style="left:144.3px;top:573.4px;font-size:14.5px;line-height:19px;letter-spacing:-0.55px;width:44.9px;text-align:center;">07,6</div>
<div class="t" style="left:217.8px;top:566.2px;font-size:14.5px;line-height:19px;letter-spacing:-0.55px;">Sauch, Sabine</div>
<div class="t" style="left:463px;top:557px;font-size:14.5px;line-height:19px;letter-spacing:-0.55px;width:44.6px;text-align:center;">11.10</div>
<div class="t" style="left:463px;top:573.4px;font-size:14.5px;line-height:19px;letter-spacing:-0.55px;width:44.6px;text-align:center;">11.30</div>
<div class="t" style="left:875.7px;top:557px;font-size:14.5px;line-height:19px;letter-spacing:-0.55px;width:44.8px;text-align:center;">11.10</div>
<div class="t" style="left:875.7px;top:573.4px;font-size:14.5px;line-height:19px;letter-spacing:-0.55px;width:44.8px;text-align:center;">11.30</div>
<div class="t" style="left:12px;top:613.46px;font-size:14.5px;line-height:19px;letter-spacing:-0.55px;width:38.4px;text-align:center;">009</div>
<div style="left:12px;top:646.14px;width:451px;height:1px;background:#8a8a8a"></div>
<div style="left:52.4px;top:600.88px;width:41.9px;height:45.26px;background:#72e600"></div>
<div style="left:96.3px;top:600.88px;width:48px;height:45.26px;background:#72e600"></div>
<div style="left:146.3px;top:600.88px;width:41.9px;height:45.26px;background:#72e600"></div>
<div style="left:190.2px;top:600.88px;width:22.8px;height:45.26px;background:#72e600"></div>
<div style="left:215px;top:600.88px;width:98px;height:45.26px;background:#72e600"></div>
<div style="left:315px;top:600.88px;width:48px;height:45.26px;background:#72e600"></div>
<div style="left:365px;top:600.88px;width:48px;height:45.26px;background:#72e600"></div>
<div style="left:415px;top:600.88px;width:48px;height:45.26px;background:#72e600"></div>
<div class="t" style="left:50.4px;top:604.56px;font-size:14.5px;line-height:19px;letter-spacing:-0.55px;width:44.9px;text-align:center;">11.40</div>
<div class="t" style="left:50.4px;top:620.96px;font-size:14.5px;line-height:19px;letter-spacing:-0.55px;width:44.9px;text-align:center;">12.00</div>
<div class="t" style="left:94.3px;top:604.56px;font-size:14.5px;line-height:19px;letter-spacing:-0.55px;width:51px;text-align:center;">g2*</div>
<div class="t" style="left:144.3px;top:604.56px;font-size:14.5px;line-height:19px;letter-spacing:-0.55px;width:44.9px;text-align:center;">017</div>
<div class="t" style="left:144.3px;top:620.96px;font-size:14.5px;line-height:19px;letter-spacing:-0.55px;width:44.9px;text-align:center;">12</div>
<div class="t" style="left:217.8px;top:613.76px;font-size:14.5px;line-height:19px;letter-spacing:-0.55px;">Ebert, Erna</div>
<div class="t" style="left:463px;top:604.56px;font-size:14.5px;line-height:19px;letter-spacing:-0.55px;width:44.6px;text-align:center;">11.40</div>
<div class="t" style="left:463px;top:620.96px;font-size:14.5px;line-height:19px;letter-spacing:-0.55px;width:44.6px;text-align:center;">12.00</div>
<div class="t" style="left:875.7px;top:604.56px;font-size:14.5px;line-height:19px;letter-spacing:-0.55px;width:44.8px;text-align:center;">11.40</div>
<div class="t" style="left:875.7px;top:620.96px;font-size:14.5px;line-height:19px;letter-spacing:-0.55px;width:44.8px;text-align:center;">12.00</div>
<div class="t" style="left:12px;top:661.02px;font-size:14.5px;line-height:19px;letter-spacing:-0.55px;width:38.4px;text-align:center;">010</div>
<div style="left:12px;top:693.7px;width:451px;height:1px;background:#8a8a8a"></div>
<div style="left:52.4px;top:648.44px;width:41.9px;height:45.26px;background:#72e600"></div>
<div style="left:96.3px;top:648.44px;width:48px;height:45.26px;background:#72e600"></div>
<div style="left:146.3px;top:648.44px;width:41.9px;height:45.26px;background:#72e600"></div>
<div style="left:190.2px;top:648.44px;width:22.8px;height:45.26px;background:#72e600"></div>
<div style="left:215px;top:648.44px;width:98px;height:45.26px;background:#72e600"></div>
<div style="left:315px;top:648.44px;width:48px;height:45.26px;background:#72e600"></div>
<div style="left:365px;top:648.44px;width:48px;height:45.26px;background:#72e600"></div>
<div style="left:415px;top:648.44px;width:48px;height:45.26px;background:#72e600"></div>
<div class="t" style="left:50.4px;top:652.12px;font-size:14.5px;line-height:19px;letter-spacing:-0.55px;width:44.9px;text-align:center;">12.10</div>
<div class="t" style="left:50.4px;top:668.52px;font-size:14.5px;line-height:19px;letter-spacing:-0.55px;width:44.9px;text-align:center;">12.30</div>
<div class="t" style="left:94.3px;top:652.12px;font-size:14.5px;line-height:19px;letter-spacing:-0.55px;width:51px;text-align:center;">g2*</div>
<div class="t" style="left:144.3px;top:652.12px;font-size:14.5px;line-height:19px;letter-spacing:-0.55px;width:44.9px;text-align:center;">036</div>
<div class="t" style="left:144.3px;top:668.52px;font-size:14.5px;line-height:19px;letter-spacing:-0.55px;width:44.9px;text-align:center;">10,5</div>
<div class="t" style="left:217.8px;top:661.32px;font-size:14.5px;line-height:19px;letter-spacing:-0.55px;">Kloos, Kathrin</div>
<div class="t" style="left:463px;top:652.12px;font-size:14.5px;line-height:19px;letter-spacing:-0.55px;width:44.6px;text-align:center;">12.10</div>
<div class="t" style="left:463px;top:668.52px;font-size:14.5px;line-height:19px;letter-spacing:-0.55px;width:44.6px;text-align:center;">12.30</div>
<div class="t" style="left:875.7px;top:652.12px;font-size:14.5px;line-height:19px;letter-spacing:-0.55px;width:44.8px;text-align:center;">12.10</div>
<div class="t" style="left:875.7px;top:668.52px;font-size:14.5px;line-height:19px;letter-spacing:-0.55px;width:44.8px;text-align:center;">12.30</div>
<div style="left:50.4px;top:218.6px;width:1px;height:475.6px;background:#8a8a8a"></div>
<div style="left:94.3px;top:218.6px;width:1px;height:475.6px;background:#8a8a8a"></div>
<div style="left:144.3px;top:218.6px;width:1px;height:475.6px;background:#8a8a8a"></div>
<div style="left:188.2px;top:218.6px;width:1px;height:475.6px;background:#8a8a8a"></div>
<div style="left:213px;top:218.6px;width:1px;height:475.6px;background:#8a8a8a"></div>
<div style="left:313px;top:218.6px;width:1px;height:475.6px;background:#8a8a8a"></div>
<div style="left:363px;top:218.6px;width:1px;height:475.6px;background:#8a8a8a"></div>
<div style="left:413px;top:218.6px;width:1px;height:475.6px;background:#8a8a8a"></div>
<div style="left:463px;top:218.6px;width:1px;height:475.6px;background:#8a8a8a"></div>
<div style="left:464px;top:219.1px;width:411.7px;height:46.56px;background:#96c8cc"></div>
<div style="left:506.6px;top:219.1px;width:1px;height:46.56px;background:#a9c4c6"></div>
<div style="left:556.7px;top:219.1px;width:1px;height:46.56px;background:#a9c4c6"></div>
<div style="left:600.6px;top:219.1px;width:1px;height:46.56px;background:#a9c4c6"></div>
<div style="left:625.5px;top:219.1px;width:1px;height:46.56px;background:#a9c4c6"></div>
<div style="left:725.5px;top:219.1px;width:1px;height:46.56px;background:#a9c4c6"></div>
<div style="left:775.6px;top:219.1px;width:1px;height:46.56px;background:#a9c4c6"></div>
<div style="left:825.6px;top:219.1px;width:1px;height:46.56px;background:#a9c4c6"></div>
<div class="t" style="left:463px;top:224.08px;font-size:14.5px;line-height:19px;letter-spacing:-0.55px;width:44.6px;text-align:center;">07.40</div>
<div class="t" style="left:463px;top:240.48px;font-size:14.5px;line-height:19px;letter-spacing:-0.55px;width:44.6px;text-align:center;">08.00</div>
<div class="t" style="left:506.6px;top:224.08px;font-size:14.5px;line-height:19px;letter-spacing:-0.55px;width:51.1px;text-align:center;">D2</div>
<div class="t" style="left:506.6px;top:240.48px;font-size:14.5px;line-height:19px;letter-spacing:-0.55px;width:51.1px;text-align:center;">Hr</div>
<div class="t" style="left:556.7px;top:224.08px;font-size:14.5px;line-height:19px;letter-spacing:-0.55px;width:44.9px;text-align:center;">004</div>
<div class="t" style="left:556.7px;top:240.48px;font-size:14.5px;line-height:19px;letter-spacing:-0.55px;width:44.9px;text-align:center;">08</div>
<div class="t" style="left:630.3px;top:224.08px;font-size:14.5px;line-height:19px;letter-spacing:-0.55px;">Bocholdt,</div>
<div class="t" style="left:630.3px;top:240.48px;font-size:14.5px;line-height:19px;letter-spacing:-0.55px;">Bettina</div>
<div class="t" style="left:506.6px;top:271.64px;font-size:14.5px;line-height:19px;letter-spacing:-0.55px;width:51.1px;text-align:center;">E2*</div>
<div class="t" style="left:506.6px;top:288.04px;font-size:14.5px;line-height:19px;letter-spacing:-0.55px;width:51.1px;text-align:center;">Mw</div>
<div style="left:1061px;top:188.5px;width:20.5px;height:507.5px;background:#f7f7f7"></div>
<div style="left:1062px;top:210.5px;width:19px;height:92.5px;background:#cdcdcd"></div>
<svg style="left:1066px;top:197px" width="10" height="7" viewBox="0 0 10 7"><path d="M1 6L5 1.500L9 6" stroke="#505050" stroke-width="2.200" fill="none"/></svg>
<svg style="left:1066px;top:682px" width="10" height="7" viewBox="0 0 10 7"><path d="M1 1L5 5.500L9 1" stroke="#505050" stroke-width="2.200" fill="none"/></svg>
<div style="left:12px;top:696px;width:1049px;height:20.5px;background:#f7f7f7"></div>
<div style="left:35px;top:697px;width:22px;height:18.5px;background:#cdcdcd"></div>
<svg style="left:20px;top:701px" width="7" height="10" viewBox="0 0 7 10"><path d="M6 1L1.500 5L6 9" stroke="#505050" stroke-width="2.200" fill="none"/></svg>
<svg style="left:1046px;top:701px" width="7" height="10" viewBox="0 0 7 10"><path d="M1 1L5.500 5L1 9" stroke="#505050" stroke-width="2.200" fill="none"/></svg>
<div style="left:1061px;top:696px;width:20.5px;height:20.5px;background:#f7f7f7"></div>
<div style="left:6px;top:718.5px;width:1078px;height:1.5px;background:#8a8a8a"></div>
<!-- opts -->
<div style="left:1086px;top:186.5px;width:262.5px;height:692px;background:#f9f9f9;border-right:1px solid #a4a4a4"></div>
<div style="left:1088px;top:877px;width:261px;height:2px;background:#a39ca3"></div>
<div style="left:5px;top:881.7px;width:1349px;height:3.7px;background:#e2dde4"></div>
<div style="left:1351.5px;top:154px;width:1px;height:731px;background:#dcd6dc"></div>
<div style="left:1099px;top:194.4px;width:11.3px;height:11.5px;background:linear-gradient(135deg,#cfcfd6 0%,#e6e4ea 45%,#f6f6f6 55%,#fff 100%);border:1px solid #e4e4e8;border-top-color:#c4c4cc;border-left-color:#c4c4cc"></div>
<div class="t" style="left:1117px;top:191.4px;font-size:14.5px;line-height:19px;letter-spacing:-0.55px;">Nur nicht leere Gr.</div>
<div style="left:1099px;top:215.6px;width:11.3px;height:11.5px;background:linear-gradient(135deg,#cfcfd6 0%,#e6e4ea 45%,#f6f6f6 55%,#fff 100%);border:1px solid #e4e4e8;border-top-color:#c4c4cc;border-left-color:#c4c4cc"></div>
<div class="t" style="left:1117px;top:212.6px;font-size:14.5px;line-height:19px;letter-spacing:-0.55px;">nur T. der grünen Gr.</div>
<div style="left:1099px;top:236.8px;width:11.3px;height:11.5px;background:linear-gradient(135deg,#cfcfd6 0%,#e6e4ea 45%,#f6f6f6 55%,#fff 100%);border:1px solid #e4e4e8;border-top-color:#c4c4cc;border-left-color:#c4c4cc"></div>
<div class="t" style="left:1117px;top:233.8px;font-size:14.5px;line-height:19px;letter-spacing:-0.55px;">ohne Zeitraster</div>
<div style="left:1099px;top:258px;width:11.3px;height:11.5px;background:linear-gradient(135deg,#cfcfd6 0%,#e6e4ea 45%,#f6f6f6 55%,#fff 100%);border:1px solid #e4e4e8;border-top-color:#c4c4cc;border-left-color:#c4c4cc"></div>
<div class="t" style="left:1117px;top:255px;font-size:14.5px;line-height:19px;letter-spacing:-0.55px;">kompakte Anzeige</div>
<div style="left:1254px;top:193px;width:1px;height:84px;background:#a8a8a8"></div>
<div class="t" style="left:1260.4px;top:187.5px;font-size:14.5px;line-height:19px;letter-spacing:-0.55px;">minimaler</div>
<div class="t" style="left:1260.4px;top:203.7px;font-size:14.5px;line-height:19px;letter-spacing:-0.55px;">Zeitabstand</div>
<div class="t" style="left:1260.4px;top:219.9px;font-size:14.5px;line-height:19px;letter-spacing:-0.55px;">in min.</div>
<div style="left:1264px;top:243px;width:64px;height:31.5px;background:#f9f9f9;border:1px solid #b4b8bc"></div>
<div class="t" style="left:1269px;top:247.25px;font-size:16px;line-height:21px;letter-spacing:-0.30px;">20</div>
<div style="left:1307px;top:246px;width:16px;height:12.25px;background:#e6e6e6;border:1px solid #d0d0d0"></div>
<div style="left:1307px;top:259.25px;width:16px;height:12.25px;background:#e6e6e6;border:1px solid #d0d0d0"></div>
<svg style="left:1310.5px;top:250px" width="9" height="6" viewBox="0 0 9 6"><path d="M0 6L4.500 0L9 6z" fill="#111"/></svg>
<svg style="left:1310.5px;top:261.5px" width="9" height="6" viewBox="0 0 9 6"><path d="M0 0L4.500 6L9 0z" fill="#111"/></svg>
<div class="t" style="left:1096px;top:279.5px;font-size:14.5px;line-height:19px;letter-spacing:-0.55px;">Max. Zahl von</div>
<div class="t" style="left:1096px;top:295.8px;font-size:14.5px;line-height:19px;letter-spacing:-0.55px;">Prüfungstakt.</div>
<div class="t" style="left:1096px;top:312.1px;font-size:14.5px;line-height:19px;letter-spacing:-0.55px;">aller Gruppn</div>
<div style="left:1189px;top:294.5px;width:63.5px;height:31.5px;background:#f9f9f9;border:1px solid #b4b8bc"></div>
<div class="t" style="left:1194px;top:298.75px;font-size:16px;line-height:21px;letter-spacing:-0.30px;">50</div>
<div style="left:1231.5px;top:297.5px;width:16px;height:12.25px;background:#e6e6e6;border:1px solid #d0d0d0"></div>
<div style="left:1231.5px;top:310.75px;width:16px;height:12.25px;background:#e6e6e6;border:1px solid #d0d0d0"></div>
<svg style="left:1235px;top:301.5px" width="9" height="6" viewBox="0 0 9 6"><path d="M0 6L4.500 0L9 6z" fill="#111"/></svg>
<svg style="left:1235px;top:313px" width="9" height="6" viewBox="0 0 9 6"><path d="M0 0L4.500 6L9 0z" fill="#111"/></svg>
<div class="btn" style="left:1258px;top:296px;width:78px;height:28.5px;"></div>
<div class="t" style="left:1272.4px;top:301.95px;font-size:14.5px;line-height:19px;letter-spacing:-1.11px;">Minimum</div>
<div style="left:1097.5px;top:338.5px;width:239.5px;height:532px;border:1px solid #dcd6de"></div>
<div style="left:1104px;top:330.5px;width:169px;height:16px;background:#f9f9f9"></div>
<div class="t" style="left:1107px;top:329.6px;font-size:14.5px;line-height:19px;letter-spacing:-0.56px;">Einstellungen für den Druck</div>
<div style="left:1105px;top:350.5px;width:16px;height:16px;background:#f9f9f9;border:1.5px solid #444"></div>
<div class="t" style="left:1125.7px;top:350.2px;font-size:14.5px;line-height:19px;letter-spacing:-0.55px;">mit Schnitt / mit mündl. Noten</div>
<div style="left:1105px;top:370.5px;width:16px;height:16px;background:#f9f9f9;border:1.5px solid #444"></div>
<div class="t" style="left:1125.7px;top:370.4px;font-size:14.5px;line-height:19px;letter-spacing:-0.55px;">mit Merker</div>
<div style="left:1214px;top:370.5px;width:16px;height:16px;background:#f9f9f9;border:1.5px solid #444"></div>
<div class="t" style="left:1234.5px;top:370.4px;font-size:14.5px;line-height:19px;letter-spacing:-0.55px;">DBZ bei eig. L.</div>
<div style="left:1105px;top:400px;width:188px;height:44.5px;border:1px solid #dcd6de"></div>
<div style="left:1112px;top:392px;width:166px;height:16px;background:#f9f9f9"></div>
<div class="t" style="left:1115px;top:391.5px;font-size:14.5px;line-height:19px;letter-spacing:-0.54px;">Ausschnitt (max. 16 Takte):</div>
<svg style="left:1114.2px;top:408.2px" width="18" height="18" viewBox="0 0 18 18"><circle cx="9" cy="9" r="7.800" fill="#f9f9f9" stroke="#444" stroke-width="1.300"/><circle cx="9" cy="9" r="4.300" fill="#222"/></svg>
<div class="t" style="left:1136px;top:408.7px;font-size:14.5px;line-height:19px;letter-spacing:-0.55px;">01-16</div>
<svg style="left:1114.2px;top:424.5px" width="18" height="18" viewBox="0 0 18 18"><circle cx="9" cy="9" r="7.800" fill="#f9f9f9" stroke="#444" stroke-width="1.300"/></svg>
<div class="t" style="left:1136px;top:425.2px;font-size:14.5px;line-height:19px;letter-spacing:-0.55px;">17-32</div>
<svg style="left:1202px;top:408.2px" width="18" height="18" viewBox="0 0 18 18"><circle cx="9" cy="9" r="7.800" fill="#f9f9f9" stroke="#444" stroke-width="1.300"/></svg>
<div class="t" style="left:1224px;top:408.7px;font-size:14.5px;line-height:19px;letter-spacing:-0.55px;">33-48</div>
<svg style="left:1202px;top:424.5px" width="18" height="18" viewBox="0 0 18 18"><circle cx="9" cy="9" r="7.800" fill="#f9f9f9" stroke="#444" stroke-width="1.300"/></svg>
<div class="t" style="left:1224px;top:425.2px;font-size:14.5px;line-height:19px;letter-spacing:-0.55px;">49-64</div>
<div class="btn" style="left:1299px;top:399.5px;width:26px;height:24px;"></div>
<div class="t" style="left:1299px;top:399.3px;font-size:19px;line-height:25px;font-weight:bold;width:26px;text-align:center;">T</div>
<div class="t" style="left:1107.3px;top:461px;font-size:14.5px;line-height:19px;letter-spacing:-0.73px;">Pausenmarkierungen</div>
<div style="left:1239px;top:450.5px;width:89px;height:26px;background:#f9f9f9;border:1px solid #b4b8bc"></div>
<div class="btn" style="left:1110.4px;top:487px;width:153.6px;height:26px;"></div>
<svg style="left:1113px;top:490px" width="20" height="20" viewBox="0 0 20 20"><circle cx="7" cy="7" r="5.800" fill="#fff" stroke="#1a1a1a" stroke-width="1.400"/><path d="M7 3.500V10.500M3.500 7H10.500" stroke="#f01020" stroke-width="1.600"/><path d="M11.300 11.300L13.300 13.300" stroke="#f0e800" stroke-width="2.200"/><path d="M13 13L18.500 18.500" stroke="#1a1a1a" stroke-width="2.800" stroke-linecap="round"/></svg>
<div class="t" style="left:1138.5px;top:490.8px;font-size:16px;line-height:21px;letter-spacing:0.67px;font-weight:bold;">Blattverteilung</div>
<div class="btn" style="left:1299px;top:487px;width:26px;height:26px;"></div>
<svg style="left:1303px;top:491px" width="17" height="18" viewBox="0 0 17 18"><path d="M2 0V16" stroke="#222" stroke-width="1.200"/><path d="M2 3h3" stroke="#222" stroke-width="1"/><ellipse cx="5" cy="3" rx="2.800" ry="2" fill="#f0e800" stroke="#333" stroke-width="0.600"/><path d="M9 3h7" stroke="#222" stroke-width="1.200" stroke-dasharray="2 1.500"/><path d="M2 9h3" stroke="#222" stroke-width="1"/><ellipse cx="5" cy="9" rx="2.800" ry="2" fill="#f0e800" stroke="#333" stroke-width="0.600"/><path d="M9 9h7" stroke="#222" stroke-width="1.200" stroke-dasharray="2 1.500"/><path d="M2 15h3" stroke="#222" stroke-width="1"/><ellipse cx="5" cy="15" rx="2.800" ry="2" fill="#f0e800" stroke="#333" stroke-width="0.600"/><path d="M9 15h7" stroke="#222" stroke-width="1.200" stroke-dasharray="2 1.500"/></svg>
<div class="btn" style="left:1110.4px;top:524.5px;width:78.5px;height:24.5px;"></div>
<div class="t" style="left:1123.2px;top:528.55px;font-size:14.5px;line-height:19px;letter-spacing:-0.60px;">Standard</div>
<div class="btn" style="left:1235.5px;top:524.5px;width:92.5px;height:24.5px;"></div>
<div class="t" style="left:1243.5px;top:528.55px;font-size:14.5px;line-height:19px;letter-spacing:-0.53px;">zurücksetzen</div>
<div style="left:1108px;top:557px;width:220px;height:283px;border:1px solid #e0dce2"></div>
<div class="t" style="left:1193px;top:564.5px;font-size:16.5px;line-height:21px;letter-spacing:-0.23px;">Aa (10)</div>
<div style="left:1113px;top:584.5px;width:212px;height:254px;background:#f9f9f9;border:1px solid #a4a8ae"></div>
<svg style="left:1122.7px;top:592px" width="14" height="14" viewBox="0 0 14 14"><rect x="0.600" y="0.600" width="12.800" height="12.800" fill="#e2e2e2" stroke="#7a7a7a" stroke-width="1.200"/><path d="M3 7l3 3.500l5.500-7" stroke="#8a8a8a" stroke-width="1.800" fill="none"/></svg>
<div class="t" style="left:1145.5px;top:588.5px;font-size:16.5px;line-height:21px;letter-spacing:-0.08px;">Blatt 01</div>
<svg style="left:1122.7px;top:614.42px" width="14" height="14" viewBox="0 0 14 14"><rect x="0.600" y="0.600" width="12.800" height="12.800" fill="#e2e2e2" stroke="#7a7a7a" stroke-width="1.200"/><path d="M3 7l3 3.500l5.500-7" stroke="#8a8a8a" stroke-width="1.800" fill="none"/></svg>
<div class="t" style="left:1145.5px;top:610.92px;font-size:16.5px;line-height:21px;letter-spacing:-0.08px;">Blatt 02</div>
<svg style="left:1122.7px;top:636.84px" width="14" height="14" viewBox="0 0 14 14"><rect x="0.600" y="0.600" width="12.800" height="12.800" fill="#e2e2e2" stroke="#7a7a7a" stroke-width="1.200"/><path d="M3 7l3 3.500l5.500-7" stroke="#8a8a8a" stroke-width="1.800" fill="none"/></svg>
<div class="t" style="left:1145.5px;top:633.34px;font-size:16.5px;line-height:21px;letter-spacing:-0.08px;">Blatt 03</div>
<svg style="left:1122.7px;top:659.26px" width="14" height="14" viewBox="0 0 14 14"><rect x="0.600" y="0.600" width="12.800" height="12.800" fill="#e2e2e2" stroke="#7a7a7a" stroke-width="1.200"/><path d="M3 7l3 3.500l5.500-7" stroke="#8a8a8a" stroke-width="1.800" fill="none"/></svg>
<div class="t" style="left:1145.5px;top:655.76px;font-size:16.5px;line-height:21px;letter-spacing:-0.08px;">Blatt 04</div>
<svg style="left:1122.7px;top:681.68px" width="14" height="14" viewBox="0 0 14 14"><rect x="0.600" y="0.600" width="12.800" height="12.800" fill="#e2e2e2" stroke="#7a7a7a" stroke-width="1.200"/><path d="M3 7l3 3.500l5.500-7" stroke="#8a8a8a" stroke-width="1.800" fill="none"/></svg>
<div class="t" style="left:1145.5px;top:678.18px;font-size:16.5px;line-height:21px;letter-spacing:-0.08px;">Blatt 05</div>
<svg style="left:1122.7px;top:704.1px" width="14" height="14" viewBox="0 0 14 14"><rect x="0.600" y="0.600" width="12.800" height="12.800" fill="#e2e2e2" stroke="#7a7a7a" stroke-width="1.200"/><path d="M3 7l3 3.500l5.500-7" stroke="#8a8a8a" stroke-width="1.800" fill="none"/></svg>
<div class="t" style="left:1145.5px;top:700.6px;font-size:16.5px;line-height:21px;letter-spacing:-0.08px;">Blatt 06</div>
<svg style="left:1122.7px;top:726.52px" width="14" height="14" viewBox="0 0 14 14"><rect x="0.600" y="0.600" width="12.800" height="12.800" fill="#e2e2e2" stroke="#7a7a7a" stroke-width="1.200"/><path d="M3 7l3 3.500l5.500-7" stroke="#8a8a8a" stroke-width="1.800" fill="none"/></svg>
<div class="t" style="left:1145.5px;top:723.02px;font-size:16.5px;line-height:21px;letter-spacing:-0.08px;">Blatt 07</div>
<svg style="left:1122.7px;top:748.94px" width="14" height="14" viewBox="0 0 14 14"><rect x="0.600" y="0.600" width="12.800" height="12.800" fill="#e2e2e2" stroke="#7a7a7a" stroke-width="1.200"/><path d="M3 7l3 3.500l5.500-7" stroke="#8a8a8a" stroke-width="1.800" fill="none"/></svg>
<div class="t" style="left:1145.5px;top:745.44px;font-size:16.5px;line-height:21px;letter-spacing:-0.08px;">Blatt 08</div>
<svg style="left:1122.7px;top:771.36px" width="14" height="14" viewBox="0 0 14 14"><rect x="0.600" y="0.600" width="12.800" height="12.800" fill="#e2e2e2" stroke="#7a7a7a" stroke-width="1.200"/><path d="M3 7l3 3.500l5.500-7" stroke="#8a8a8a" stroke-width="1.800" fill="none"/></svg>
<div class="t" style="left:1145.5px;top:767.86px;font-size:16.5px;line-height:21px;letter-spacing:-0.08px;">Blatt 09</div>
<svg style="left:1122.7px;top:793.78px" width="14" height="14" viewBox="0 0 14 14"><rect x="0.600" y="0.600" width="12.800" height="12.800" fill="#e2e2e2" stroke="#7a7a7a" stroke-width="1.200"/><path d="M3 7l3 3.500l5.500-7" stroke="#8a8a8a" stroke-width="1.800" fill="none"/></svg>
<div class="t" style="left:1145.5px;top:790.28px;font-size:16.5px;line-height:21px;letter-spacing:-0.08px;">Blatt 10</div>
<svg style="left:1122.7px;top:816.2px" width="14" height="14" viewBox="0 0 14 14"><rect x="0.600" y="0.600" width="12.800" height="12.800" fill="#e2e2e2" stroke="#7a7a7a" stroke-width="1.200"/><path d="M3 7l3 3.500l5.500-7" stroke="#8a8a8a" stroke-width="1.800" fill="none"/></svg>
<div class="t" style="left:1145.5px;top:812.7px;font-size:16.5px;line-height:21px;letter-spacing:0.07px;">Blatt 11</div>
<div style="left:1302.5px;top:586px;width:21.5px;height:251px;background:#f7f7f7"></div>
<div style="left:1303px;top:608px;width:19px;height:30px;background:#cdcdcd"></div>
<svg style="left:1307.5px;top:595px" width="10" height="7" viewBox="0 0 10 7"><path d="M1 6L5 1.500L9 6" stroke="#505050" stroke-width="2.200" fill="none"/></svg>
<svg style="left:1307.5px;top:823px" width="10" height="7" viewBox="0 0 10 7"><path d="M1 1L5 5.500L9 1" stroke="#505050" stroke-width="2.200" fill="none"/></svg>
<div style="left:1108px;top:839px;width:57px;height:27px;border:1px solid #dcd6de;border-top:none;background:#f9f9f9"></div>
<div style="left:1164px;top:842px;width:51px;height:21.8px;border-right:1px solid #dcd6de;border-bottom:1px solid #dcd6de"></div>
<div style="left:1215px;top:842px;width:52px;height:21.8px;border-right:1px solid #dcd6de;border-bottom:1px solid #dcd6de"></div>
<div style="left:1267px;top:842px;width:50.8px;height:21.8px;border-right:1px solid #dcd6de;border-bottom:1px solid #dcd6de"></div>
<div class="t" style="left:1118.6px;top:845.5px;font-size:14.5px;line-height:19px;letter-spacing:-0.55px;">1/Bl.</div>
<div class="t" style="left:1170.5px;top:843.5px;font-size:14.5px;line-height:19px;letter-spacing:-0.55px;">2/Bl.</div>
<div class="t" style="left:1223px;top:843.5px;font-size:14.5px;line-height:19px;letter-spacing:-0.55px;">3/Bl.</div>
<div class="t" style="left:1275.6px;top:843.5px;font-size:14.5px;line-height:19px;letter-spacing:-0.55px;">5/Bl.</div>
<!-- rpanel -->
<div style="left:1356px;top:113.5px;width:305.5px;height:4px;background:linear-gradient(#8f898c,#756d72)"></div>
<div style="left:1356px;top:113.5px;width:5.3px;height:773px;background:linear-gradient(90deg,#9a9296,#776e73)"></div>
<div style="left:1361.3px;top:118.5px;width:297px;height:767px;background:#f9f9f9"></div>
<div style="left:1658.8px;top:117px;width:2.5px;height:768px;background:#a59ea5"></div>
<div style="left:1659.5px;top:114px;width:4px;height:775px;background:#f9f9f9"></div>
<div style="left:1361px;top:883.5px;width:298.5px;height:1.2px;background:#b0b4c0"></div>
<div class="t" style="left:1366px;top:138.5px;font-size:14.5px;line-height:19px;letter-spacing:-0.37px;">aktuelle SchZahl:</div>
<div style="left:1497px;top:126px;width:49.5px;height:27.5px;background:#f9f9f9;border:1px solid #c4c4c8;border-top:2px solid #8c8c8c;border-left:2px solid #9c9c9c"></div>
<div class="t" style="left:1504.2px;top:128.8px;font-size:17.5px;line-height:23px;letter-spacing:0.17px;color:#1a1a40;">085</div>
<div style="left:1552px;top:126px;width:102px;height:77.3px;border:1px solid #dcd6de"></div>
<div style="left:1559px;top:119px;width:90px;height:15px;background:#f9f9f9"></div>
<div class="t" style="left:1562px;top:116.5px;font-size:14.5px;line-height:19px;letter-spacing:-0.61px;">Schülerzahlen</div>
<div class="t" style="left:1558.5px;top:133px;font-size:14.5px;line-height:19px;letter-spacing:-0.55px;">078</div>
<div class="t" style="left:1589.5px;top:133px;font-size:14.5px;line-height:19px;letter-spacing:-0.31px;">SchZahl</div>
<div class="t" style="left:1558.5px;top:157.8px;font-size:14.5px;line-height:19px;letter-spacing:-0.55px;">007</div>
<div class="btn" style="left:1588.5px;top:157px;width:53px;height:17px;"></div>
<div class="t" style="left:1588.5px;top:157.3px;font-size:14.5px;line-height:19px;letter-spacing:-0.55px;width:53px;text-align:center;">KoopZ.</div>
<div class="t" style="left:1558.5px;top:181.5px;font-size:14.5px;line-height:19px;letter-spacing:-0.55px;">018</div>
<div class="btn" style="left:1588.5px;top:180.8px;width:53px;height:17px;"></div>
<div class="t" style="left:1588.5px;top:181.1px;font-size:14.5px;line-height:19px;letter-spacing:-0.55px;width:53px;text-align:center;">Löschm.</div>
<div style="left:1366.5px;top:166.5px;width:181px;height:37px;border:1px solid #c8c4cc;border-left-color:#f0f0f0;border-top-color:#b0b0b0"></div>
<div class="btn" style="left:1369px;top:170.7px;width:28.7px;height:28.5px;"></div>
<svg style="left:1374.6px;top:175.8px" width="19" height="18.5" viewBox="0 0 19 18.5"><path d="M1 11.500L5 17.500L18 4.500" stroke="#141480" stroke-width="2.600" fill="none"/><path d="M0.800 10.300L4.800 15.800L17.800 2.500" stroke="#10a810" stroke-width="3.200" fill="none"/><path d="M1 9.200L5 14.300L17.300 1.500" stroke="#38d838" stroke-width="1" fill="none"/></svg>
<div class="btn" style="left:1410.5px;top:170.7px;width:28.5px;height:28.5px;"></div>
<svg style="left:1416.6px;top:176px" width="17.6" height="19" viewBox="0 0 17.6 19"><path d="M0.500 0.500C2 3 12 3 13.500 0.500" fill="none" stroke="#111" stroke-width="1"/><path d="M1.500 2.200H12.500L8.300 7V14L7 15.500L5.800 14V7Z" fill="#8a8a8a" stroke="#1a1a1a" stroke-width="1"/><path d="M6 7V14H8V7Z" fill="#1a1a1a"/><path d="M12.300 4.500L16.800 10.800H13.900V16.500H10.700V10.800H8.500Z" fill="#ff0a18"/><path d="M12.300 4.500L14 1.500" stroke="#111" stroke-width="0.800"/><path d="M0 18.400H17.600" stroke="#1a1a1a" stroke-width="1.300"/></svg>
<div class="btn" style="left:1453px;top:170.7px;width:28.5px;height:28.5px;"></div>
<svg style="left:1457.6px;top:175.2px" width="20" height="18.6" viewBox="0 0 20 18.6"><path d="M0.3 12.6C0.3 7.2 10.3 7.2 10.3 12.6Z" fill="#7cc634" stroke="#3f7f14" stroke-width="0.600"/><circle cx="5.3" cy="4.3" r="4.2" fill="#7a4a14"/><ellipse cx="5.3" cy="5.5" rx="3.4" ry="3.3" fill="#fbe0a8" stroke="#a8743a" stroke-width="0.400"/><path d="M9.7 12.6C9.7 7.2 19.7 7.2 19.7 12.6Z" fill="#7cc634" stroke="#3f7f14" stroke-width="0.600"/><circle cx="14.7" cy="4.3" r="4.2" fill="#7a4a14"/><ellipse cx="14.7" cy="5.5" rx="3.4" ry="3.3" fill="#fbe0a8" stroke="#a8743a" stroke-width="0.400"/><path d="M5 18.3C5 12.9 15 12.9 15 18.3Z" fill="#7cc634" stroke="#3f7f14" stroke-width="0.600"/><circle cx="10" cy="10" r="4.2" fill="#7a4a14"/><ellipse cx="10" cy="11.2" rx="3.4" ry="3.3" fill="#fbe0a8" stroke="#a8743a" stroke-width="0.400"/></svg>
<div class="btn" style="left:1514.5px;top:170.7px;width:28.5px;height:28.5px;"></div>
<svg style="left:1520.2px;top:176.7px" width="17.8" height="17.5" viewBox="0 0 17.8 17.5"><path d="M0 0.500H17.800V17.200H1.500L0 15.700Z" fill="#7a7a00" stroke="#2a2a00" stroke-width="0.800"/><rect x="3.300" y="0.900" width="10.500" height="7.300" fill="#e8e2ea"/><rect x="15" y="1.300" width="1.600" height="1.400" fill="#d8d8d8"/><rect x="3.300" y="10.700" width="10.700" height="6.300" fill="#141414"/><rect x="11" y="11.800" width="2" height="4" fill="#fff"/></svg>
<div style="left:1366.8px;top:210.8px;width:48px;height:23px;background:#d9d9d9;border:1px solid #c4c4c4"></div>
<div class="t" style="left:1377.7px;top:212.5px;font-size:15px;line-height:20px;letter-spacing:-0.13px;color:#8a8a8a;font-weight:bold;">Alle</div>
<div class="btn" style="left:1418px;top:209.2px;width:236px;height:25.5px;"></div>
<div class="t" style="left:1423.7px;top:212.5px;font-size:14.5px;line-height:19px;letter-spacing:-0.56px;">alle Schüler/innen (Koop &amp; Eigene)</div>
<svg style="left:1637.5px;top:218.5px" width="11" height="7" viewBox="0 0 11 7"><path d="M0.800 0.800L5.500 5.800L10.200 0.800" stroke="#555" stroke-width="1.300" fill="none"/></svg>
<div style="left:1364px;top:239.5px;width:290px;height:34.5px;border:1px solid #c4bcc8;border-top-color:#ececec;border-left-color:#ececec"></div>
<div class="btn" style="left:1367.8px;top:243.3px;width:282.6px;height:25.5px;"></div>
<svg style="left:1420.5px;top:246px" width="16" height="20" viewBox="0 0 16 20"><path d="M1.500 3h13v16h-11l-2-2z" fill="#fff" stroke="#222" stroke-width="1.300"/><path d="M2 2.500h12" stroke="#e01020" stroke-width="1.600"/><path d="M4 1v4M8 1v4M12 1v4" stroke="#222" stroke-width="1"/><text x="8" y="11" font-family="Liberation Sans,sans-serif" font-size="5.500" font-weight="bold" text-anchor="middle" fill="#111">JAN</text><text x="8" y="17.500" font-family="Liberation Sans,sans-serif" font-size="7" font-weight="bold" text-anchor="middle" fill="#111">1</text></svg>
<div class="t" style="left:1443.8px;top:247.2px;font-size:14.5px;line-height:19px;letter-spacing:-0.57px;">Vergleichsdatum eingeben</div>
<div class="t" style="left:1365px;top:278.2px;font-size:14.5px;line-height:19px;letter-spacing:-0.56px;">aktuelle Reihenfolge:</div>
<div class="btn" style="left:1364.5px;top:299.6px;width:134.2px;height:25px;"></div>
<div class="t" style="left:1369.8px;top:303px;font-size:14.5px;line-height:19px;letter-spacing:-0.67px;">nach Sch'Numme</div>
<svg style="left:1482.5px;top:309px" width="11" height="7" viewBox="0 0 11 7"><path d="M0.800 0.800L5.500 5.800L10.200 0.800" stroke="#555" stroke-width="1.300" fill="none"/></svg>
<div style="left:1509.3px;top:307px;width:15.5px;height:15.5px;background:#f9f9f9;border:1.5px solid #444"></div>
<div class="t" style="left:1530px;top:306px;font-size:14.5px;line-height:19px;letter-spacing:-0.62px;">Reihenf. umkehren</div>
<div style="left:1364px;top:331.7px;width:39.7px;height:29px;border:1px solid #d8d4dc;background:#f9f9f9"></div>
<div style="left:1366px;top:334px;width:35.8px;height:24.8px;background:#a8a800"></div>
<div class="t" style="left:1367.2px;top:335.2px;font-size:17px;line-height:22px;letter-spacing:-1.69px;color:#1a1a00;">001</div>
<div style="left:1409.3px;top:331.7px;width:187px;height:29px;border:1px solid #d8d4dc;background:#f9f9f9"></div>
<div style="left:1411.6px;top:334px;width:182.7px;height:24.8px;background:#a8a800"></div>
<div class="t" style="left:1412.8px;top:335.2px;font-size:17px;line-height:22px;letter-spacing:-0.06px;color:#1a1a00;">Barer, Bea</div>
<div style="left:1602px;top:331.7px;width:50.5px;height:29px;border:1px solid #d8d4dc;background:#f9f9f9"></div>
<div style="left:1604.2px;top:334px;width:46.2px;height:24.8px;background:#a8a800"></div>
<div class="t" style="left:1605.2px;top:335.2px;font-size:17px;line-height:22px;letter-spacing:-0.87px;color:#1a1a00;">Bz</div>
<div style="left:1364px;top:364.7px;width:294px;height:518px;border:1px solid #d0ccd4;border-right:none;border-bottom:none;background:#f9f9f9"></div>
<div style="left:1364.3px;top:366.5px;width:293.5px;height:505px;background:#f9f9f9;border:1px solid #a8acb4"></div>
<div style="left:1366.8px;top:368.8px;width:267.5px;height:19.8px;background:#3399ff"></div>
<div class="t" style="left:1369.3px;top:368.8px;font-size:16px;line-height:21px;letter-spacing:0.10px;color:#fff;">001</div>
<div class="t" style="left:1404.3px;top:368.8px;font-size:16px;line-height:21px;letter-spacing:0.20px;color:#fff;">Barer, Bea</div>
<div class="t" style="left:1369.3px;top:388.82px;font-size:16px;line-height:21px;letter-spacing:0.10px;color:#111;">002</div>
<div class="t" style="left:1404.3px;top:388.82px;font-size:16px;line-height:21px;letter-spacing:0.20px;color:#111;">Berger, Bernd</div>
<div class="t" style="left:1369.3px;top:408.84px;font-size:16px;line-height:21px;letter-spacing:0.10px;color:#111;">003</div>
<div class="t" style="left:1404.3px;top:408.84px;font-size:16px;line-height:21px;letter-spacing:0.20px;color:#111;">Billing, Bernd</div>
<div class="t" style="left:1369.3px;top:428.86px;font-size:16px;line-height:21px;letter-spacing:0.10px;color:#111;">004</div>
<div class="t" style="left:1404.3px;top:428.86px;font-size:16px;line-height:21px;letter-spacing:0.20px;color:#111;">Bocholdt, Bettina</div>
<div class="t" style="left:1369.3px;top:448.88px;font-size:16px;line-height:21px;letter-spacing:0.10px;color:#111;">005</div>
<div class="t" style="left:1404.3px;top:448.88px;font-size:16px;line-height:21px;letter-spacing:0.20px;color:#111;">Börner, Brigitte</div>
<div class="t" style="left:1369.3px;top:468.9px;font-size:16px;line-height:21px;letter-spacing:0.10px;color:#111;">007</div>
<div class="t" style="left:1404.3px;top:468.9px;font-size:16px;line-height:21px;letter-spacing:0.20px;color:#111;">Brauch, Bianca</div>
<div class="t" style="left:1369.3px;top:488.92px;font-size:16px;line-height:21px;letter-spacing:0.10px;color:#111;">008</div>
<div class="t" style="left:1404.3px;top:488.92px;font-size:16px;line-height:21px;letter-spacing:0.20px;color:#111;">Breder, Burkhard</div>
<div class="t" style="left:1369.3px;top:508.94px;font-size:16px;line-height:21px;letter-spacing:0.10px;color:#111;">009</div>
<div class="t" style="left:1404.3px;top:508.94px;font-size:16px;line-height:21px;letter-spacing:0.20px;color:#111;">Brumm, Betty</div>
<div class="t" style="left:1369.3px;top:528.96px;font-size:16px;line-height:21px;letter-spacing:0.10px;color:#111;">010</div>
<div class="t" style="left:1404.3px;top:528.96px;font-size:16px;line-height:21px;letter-spacing:0.20px;color:#111;">Bucher, Bob</div>
<div class="t" style="left:1369.3px;top:548.98px;font-size:16px;line-height:21px;letter-spacing:0.10px;color:#111;">011</div>
<div class="t" style="left:1404.3px;top:548.98px;font-size:16px;line-height:21px;letter-spacing:0.20px;color:#111;">Bursch, Beatrix</div>
<div class="t" style="left:1369.3px;top:569px;font-size:16px;line-height:21px;letter-spacing:0.10px;color:#111;">012</div>
<div class="t" style="left:1404.3px;top:569px;font-size:16px;line-height:21px;letter-spacing:0.20px;color:#111;">Cara, Christiph</div>
<div class="t" style="left:1369.3px;top:589.02px;font-size:16px;line-height:21px;letter-spacing:0.10px;color:#111;">013</div>
<div class="t" style="left:1404.3px;top:589.02px;font-size:16px;line-height:21px;letter-spacing:0.20px;color:#111;">Dall, Doris</div>
<div class="t" style="left:1369.3px;top:609.04px;font-size:16px;line-height:21px;letter-spacing:0.10px;color:#111;">014</div>
<div class="t" style="left:1404.3px;top:609.04px;font-size:16px;line-height:21px;letter-spacing:0.20px;color:#111;">Dermer, Dieter</div>
<div class="t" style="left:1369.3px;top:629.06px;font-size:16px;line-height:21px;letter-spacing:0.10px;color:#111;">015</div>
<div class="t" style="left:1404.3px;top:629.06px;font-size:16px;line-height:21px;letter-spacing:0.20px;color:#111;">Diener, Doro</div>
<div class="t" style="left:1369.3px;top:649.08px;font-size:16px;line-height:21px;letter-spacing:0.10px;color:#111;">016</div>
<div class="t" style="left:1404.3px;top:649.08px;font-size:16px;line-height:21px;letter-spacing:0.20px;color:#111;">Dorfle, Dagmar</div>
<div class="t" style="left:1369.3px;top:669.1px;font-size:16px;line-height:21px;letter-spacing:0.10px;color:#111;">017</div>
<div class="t" style="left:1404.3px;top:669.1px;font-size:16px;line-height:21px;letter-spacing:0.20px;color:#111;">Ebert, Erna</div>
<div class="t" style="left:1369.3px;top:689.12px;font-size:16px;line-height:21px;letter-spacing:0.10px;color:#111;">018</div>
<div class="t" style="left:1404.3px;top:689.12px;font-size:16px;line-height:21px;letter-spacing:0.20px;color:#111;">Eiermann, Elsbeth</div>
<div class="t" style="left:1369.3px;top:709.14px;font-size:16px;line-height:21px;letter-spacing:0.10px;color:#111;">019</div>
<div class="t" style="left:1404.3px;top:709.14px;font-size:16px;line-height:21px;letter-spacing:0.20px;color:#111;">Firn, Franz</div>
<div class="t" style="left:1369.3px;top:729.16px;font-size:16px;line-height:21px;letter-spacing:0.10px;color:#111;">020</div>
<div class="t" style="left:1404.3px;top:729.16px;font-size:16px;line-height:21px;letter-spacing:0.20px;color:#111;">Fichter, Friderike</div>
<div class="t" style="left:1369.3px;top:749.18px;font-size:16px;line-height:21px;letter-spacing:0.10px;color:#111;">021</div>
<div class="t" style="left:1404.3px;top:749.18px;font-size:16px;line-height:21px;letter-spacing:0.20px;color:#111;">Fleik, Ferdinand</div>
<div class="t" style="left:1369.3px;top:769.2px;font-size:16px;line-height:21px;letter-spacing:0.10px;color:#111;">022</div>
<div class="t" style="left:1404.3px;top:769.2px;font-size:16px;line-height:21px;letter-spacing:0.20px;color:#111;">Gollwitz, Georg</div>
<div class="t" style="left:1369.3px;top:789.22px;font-size:16px;line-height:21px;letter-spacing:0.10px;color:#111;">023</div>
<div class="t" style="left:1404.3px;top:789.22px;font-size:16px;line-height:21px;letter-spacing:0.20px;color:#111;">Graner, Gustav</div>
<div class="t" style="left:1369.3px;top:809.24px;font-size:16px;line-height:21px;letter-spacing:0.10px;color:#111;">024</div>
<div class="t" style="left:1404.3px;top:809.24px;font-size:16px;line-height:21px;letter-spacing:0.20px;color:#111;">Greim, Gerd</div>
<div class="t" style="left:1369.3px;top:829.26px;font-size:16px;line-height:21px;letter-spacing:0.10px;color:#111;">025</div>
<div class="t" style="left:1404.3px;top:829.26px;font-size:16px;line-height:21px;letter-spacing:0.20px;color:#111;">Grinach, Günter</div>
<div class="t" style="left:1369.3px;top:849.28px;font-size:16px;line-height:21px;letter-spacing:0.10px;color:#111;">026</div>
<div class="t" style="left:1404.3px;top:849.28px;font-size:16px;line-height:21px;letter-spacing:0.20px;color:#111;">Güther, Gustl</div>
<div style="left:1635.5px;top:369.5px;width:19.5px;height:500px;background:#f7f7f7"></div>
<div style="left:1635.5px;top:390.6px;width:19px;height:134.7px;background:#cdcdcd"></div>
<svg style="left:1639.7px;top:377.2px" width="10" height="7" viewBox="0 0 10 7"><path d="M1 6L5 1.500L9 6" stroke="#505050" stroke-width="2.200" fill="none"/></svg>
<svg style="left:1639.7px;top:855.5px" width="10" height="7" viewBox="0 0 10 7"><path d="M1 1L5 5.500L9 1" stroke="#505050" stroke-width="2.200" fill="none"/></svg>
<!-- bottom -->
<div style="left:11px;top:720px;width:1072px;height:157px;background:#f9f9f9"></div>
<div style="left:11px;top:720px;width:1px;height:158px;background:#9a9a9a"></div>
<div class="t" style="left:17.4px;top:721.5px;font-size:14.5px;line-height:19px;letter-spacing:-0.55px;">SchNı</div>
<div style="left:59.3px;top:722px;width:1px;height:18px;background:#9a9a9a"></div>
<div class="t" style="left:63.9px;top:721.5px;font-size:14.5px;line-height:19px;letter-spacing:-0.55px;">Kurs</div>
<div style="left:99.2px;top:722px;width:1px;height:18px;background:#9a9a9a"></div>
<div class="t" style="left:103.8px;top:721.5px;font-size:14.5px;line-height:19px;letter-spacing:-0.55px;">Kurs</div>
<div style="left:136.6px;top:722px;width:1px;height:18px;background:#9a9a9a"></div>
<div class="t" style="left:141.2px;top:721.5px;font-size:14.5px;line-height:19px;letter-spacing:-0.55px;">Prüfungsgruppe</div>
<div style="left:266.4px;top:722px;width:1px;height:18px;background:#9a9a9a"></div>
<div class="t" style="left:271px;top:721.5px;font-size:14.5px;line-height:19px;letter-spacing:-0.55px;">M</div>
<div style="left:286.5px;top:722px;width:1px;height:18px;background:#9a9a9a"></div>
<div class="t" style="left:291.1px;top:721.5px;font-size:14.5px;line-height:19px;letter-spacing:-0.55px;">M</div>
<div style="left:306.6px;top:722px;width:1px;height:18px;background:#9a9a9a"></div>
<div class="t" style="left:311.2px;top:721.5px;font-size:14.5px;line-height:19px;letter-spacing:-0.55px;">M</div>
<div style="left:326.7px;top:722px;width:1px;height:18px;background:#9a9a9a"></div>
<div class="t" style="left:331.3px;top:721.5px;font-size:14.5px;line-height:19px;letter-spacing:-0.55px;">M</div>
<div style="left:346.8px;top:722px;width:1px;height:18px;background:#9a9a9a"></div>
<div class="t" style="left:351.4px;top:721.5px;font-size:14.5px;line-height:19px;letter-spacing:-0.55px;">M</div>
<div style="left:366.6px;top:722px;width:1px;height:18px;background:#9a9a9a"></div>
<div class="t" style="left:371.2px;top:721.5px;font-size:14.5px;line-height:19px;letter-spacing:-0.55px;">M</div>
<div style="left:386.7px;top:722px;width:1px;height:18px;background:#9a9a9a"></div>
<div class="t" style="left:391.3px;top:721.5px;font-size:14.5px;line-height:19px;letter-spacing:-0.55px;">M</div>
<div style="left:406.8px;top:722px;width:1px;height:18px;background:#9a9a9a"></div>
<div class="t" style="left:411.4px;top:721.5px;font-size:14.5px;line-height:19px;letter-spacing:-0.55px;">M</div>
<div style="left:426.8px;top:722px;width:1px;height:18px;background:#9a9a9a"></div>
<div class="t" style="left:431.4px;top:721.5px;font-size:14.5px;line-height:19px;letter-spacing:-0.55px;">Halbjahresnoten</div>
<div style="left:557.8px;top:722px;width:1px;height:18px;background:#9a9a9a"></div>
<div class="t" style="left:562.4px;top:721.5px;font-size:14.5px;line-height:19px;letter-spacing:-0.55px;">Schnitt</div>
<div style="left:633.3px;top:722px;width:1px;height:18px;background:#9a9a9a"></div>
<div class="t" style="left:637.9px;top:721.5px;font-size:14.5px;line-height:19px;letter-spacing:-0.55px;">mü</div>
<div style="left:663.2px;top:722px;width:1px;height:18px;background:#9a9a9a"></div>
<div class="t" style="left:667.8px;top:721.5px;font-size:14.5px;line-height:19px;letter-spacing:-0.55px;">Datum</div>
<div style="left:739.3px;top:722px;width:1px;height:18px;background:#9a9a9a"></div>
<div class="t" style="left:743.9px;top:721.5px;font-size:14.5px;line-height:19px;letter-spacing:-0.55px;">Tag</div>
<div style="left:827.9px;top:722px;width:1px;height:18px;background:#9a9a9a"></div>
<div class="t" style="left:832.5px;top:721.5px;font-size:14.5px;line-height:19px;letter-spacing:-0.55px;">Zeit</div>
<div style="left:908.4px;top:722px;width:1px;height:18px;background:#9a9a9a"></div>
<div style="left:12.8px;top:739.5px;width:895.6px;height:1px;background:#9a9a9a"></div>
<div style="left:12.8px;top:763px;width:896.6px;height:1px;background:#c4c8cc"></div>
<div style="left:12.8px;top:786.6px;width:896.6px;height:1px;background:#c4c8cc"></div>
<div style="left:12.8px;top:810.2px;width:896.6px;height:1px;background:#c4c8cc"></div>
<div style="left:12.8px;top:834.3px;width:896.6px;height:1px;background:#c4c8cc"></div>
<div style="left:12.8px;top:858.1px;width:896.6px;height:1px;background:#c4c8cc"></div>
<div style="left:59.3px;top:739.8px;width:1px;height:118.8px;background:#c4c8cc"></div>
<div style="left:99.2px;top:739.8px;width:1px;height:118.8px;background:#c4c8cc"></div>
<div style="left:136.6px;top:739.8px;width:1px;height:118.8px;background:#c4c8cc"></div>
<div style="left:266.4px;top:739.8px;width:1px;height:118.8px;background:#c4c8cc"></div>
<div style="left:286.5px;top:739.8px;width:1px;height:118.8px;background:#c4c8cc"></div>
<div style="left:306.6px;top:739.8px;width:1px;height:118.8px;background:#c4c8cc"></div>
<div style="left:326.7px;top:739.8px;width:1px;height:118.8px;background:#c4c8cc"></div>
<div style="left:346.8px;top:739.8px;width:1px;height:118.8px;background:#c4c8cc"></div>
<div style="left:366.6px;top:739.8px;width:1px;height:118.8px;background:#c4c8cc"></div>
<div style="left:386.7px;top:739.8px;width:1px;height:118.8px;background:#c4c8cc"></div>
<div style="left:406.8px;top:739.8px;width:1px;height:118.8px;background:#c4c8cc"></div>
<div style="left:426.8px;top:739.8px;width:1px;height:118.8px;background:#c4c8cc"></div>
<div style="left:557.8px;top:739.8px;width:1px;height:118.8px;background:#c4c8cc"></div>
<div style="left:633.3px;top:739.8px;width:1px;height:118.8px;background:#c4c8cc"></div>
<div style="left:663.2px;top:739.8px;width:1px;height:118.8px;background:#c4c8cc"></div>
<div style="left:739.3px;top:739.8px;width:1px;height:118.8px;background:#c4c8cc"></div>
<div style="left:827.9px;top:739.8px;width:1px;height:118.8px;background:#c4c8cc"></div>
<div style="left:908.4px;top:739.8px;width:1px;height:118.8px;background:#c4c8cc"></div>
<div style="left:13.3px;top:740.7px;width:45.2px;height:21.6px;background:#ff0000"></div>
<div class="t" style="left:17.4px;top:741.95px;font-size:14.5px;line-height:19px;letter-spacing:-0.55px;color:#200000;">004</div>
<div style="left:60.1px;top:740.7px;width:38.6px;height:21.6px;background:#ff0000"></div>
<div class="t" style="left:63.9px;top:741.95px;font-size:14.5px;line-height:19px;letter-spacing:-0.55px;color:#200000;">D2</div>
<div style="left:100px;top:740.7px;width:36.1px;height:21.6px;background:#ff0000"></div>
<div class="t" style="left:103.8px;top:741.95px;font-size:14.5px;line-height:19px;letter-spacing:-0.55px;color:#200000;">Hr</div>
<div style="left:137.4px;top:740.7px;width:128.5px;height:21.6px;background:#ff0000"></div>
<div class="t" style="left:141.2px;top:741.95px;font-size:14.5px;line-height:19px;letter-spacing:-0.55px;color:#200000;">001: Gr 001</div>
<div style="left:267.2px;top:740.7px;width:18.8px;height:21.6px;background:#ff0000"></div>
<div style="left:287.3px;top:740.7px;width:18.8px;height:21.6px;background:#ff0000"></div>
<div style="left:307.4px;top:740.7px;width:18.8px;height:21.6px;background:#ff0000"></div>
<div style="left:327.5px;top:740.7px;width:18.8px;height:21.6px;background:#ff0000"></div>
<div style="left:347.6px;top:740.7px;width:18.5px;height:21.6px;background:#ff0000"></div>
<div style="left:367.4px;top:740.7px;width:18.8px;height:21.6px;background:#ff0000"></div>
<div style="left:387.5px;top:740.7px;width:18.8px;height:21.6px;background:#ff0000"></div>
<div style="left:407.6px;top:740.7px;width:18.7px;height:21.6px;background:#ff0000"></div>
<div style="left:427.6px;top:740.7px;width:129.7px;height:21.6px;background:#ff0000"></div>
<div class="t" style="left:431.4px;top:741.95px;font-size:14.5px;line-height:19px;letter-spacing:-0.55px;color:#200000;">05 06 06 07</div>
<div style="left:558.6px;top:740.7px;width:74.2px;height:21.6px;background:#ff0000"></div>
<div class="t" style="left:562.4px;top:741.95px;font-size:14.5px;line-height:19px;letter-spacing:-0.55px;color:#200000;">06,0</div>
<div style="left:634.1px;top:740.7px;width:28.6px;height:21.6px;background:#ff0000"></div>
<div class="t" style="left:637.9px;top:741.95px;font-size:14.5px;line-height:19px;letter-spacing:-0.55px;color:#200000;">06</div>
<div style="left:664px;top:740.7px;width:74.8px;height:21.6px;background:#ff0000"></div>
<div class="t" style="left:667.8px;top:741.95px;font-size:14.5px;line-height:19px;letter-spacing:-0.55px;color:#200000;">02. Jun. 14</div>
<div style="left:740.1px;top:740.7px;width:87.3px;height:21.6px;background:#ff0000"></div>
<div class="t" style="left:743.9px;top:741.95px;font-size:14.5px;line-height:19px;letter-spacing:-0.55px;color:#200000;">Montag</div>
<div style="left:828.7px;top:740.7px;width:79.2px;height:21.6px;background:#ff0000"></div>
<div class="t" style="left:832.5px;top:741.95px;font-size:14.5px;line-height:19px;letter-spacing:-0.55px;color:#200000;">/</div>
<div style="left:60.1px;top:764.4px;width:38.6px;height:21.5px;background:#ff0000"></div>
<div class="t" style="left:63.9px;top:765.6px;font-size:14.5px;line-height:19px;letter-spacing:-0.55px;color:#200000;">E4</div>
<div style="left:100px;top:764.4px;width:36.1px;height:21.5px;background:#ff0000"></div>
<div class="t" style="left:103.8px;top:765.6px;font-size:14.5px;line-height:19px;letter-spacing:-0.55px;color:#200000;">Wg</div>
<div style="left:137.4px;top:764.4px;width:128.5px;height:21.5px;background:#ff0000"></div>
<div class="t" style="left:141.2px;top:765.6px;font-size:14.5px;line-height:19px;letter-spacing:-0.55px;color:#200000;">002: Gr 002</div>
<div style="left:267.2px;top:764.4px;width:18.8px;height:21.5px;background:#ff0000"></div>
<div style="left:287.3px;top:764.4px;width:18.8px;height:21.5px;background:#ff0000"></div>
<div style="left:307.4px;top:764.4px;width:18.8px;height:21.5px;background:#ff0000"></div>
<div style="left:327.5px;top:764.4px;width:18.8px;height:21.5px;background:#ff0000"></div>
<div style="left:347.6px;top:764.4px;width:18.5px;height:21.5px;background:#ff0000"></div>
<div style="left:367.4px;top:764.4px;width:18.8px;height:21.5px;background:#ff0000"></div>
<div style="left:387.5px;top:764.4px;width:18.8px;height:21.5px;background:#ff0000"></div>
<div style="left:407.6px;top:764.4px;width:18.7px;height:21.5px;background:#ff0000"></div>
<div style="left:427.6px;top:764.4px;width:129.7px;height:21.5px;background:#ff0000"></div>
<div class="t" style="left:431.4px;top:765.6px;font-size:14.5px;line-height:19px;letter-spacing:-0.55px;color:#200000;">07 07 07 08</div>
<div style="left:558.6px;top:764.4px;width:74.2px;height:21.5px;background:#ff0000"></div>
<div class="t" style="left:562.4px;top:765.6px;font-size:14.5px;line-height:19px;letter-spacing:-0.55px;color:#200000;">07,2</div>
<div style="left:634.1px;top:764.4px;width:28.6px;height:21.5px;background:#ff0000"></div>
<div class="t" style="left:637.9px;top:765.6px;font-size:14.5px;line-height:19px;letter-spacing:-0.55px;color:#200000;">08</div>
<div style="left:664px;top:764.4px;width:74.8px;height:21.5px;background:#ff0000"></div>
<div class="t" style="left:667.8px;top:765.6px;font-size:14.5px;line-height:19px;letter-spacing:-0.55px;color:#200000;">02. Jun. 14</div>
<div style="left:740.1px;top:764.4px;width:87.3px;height:21.5px;background:#ff0000"></div>
<div class="t" style="left:743.9px;top:765.6px;font-size:14.5px;line-height:19px;letter-spacing:-0.55px;color:#200000;">Montag</div>
<div style="left:828.7px;top:764.4px;width:79.2px;height:21.5px;background:#ff0000"></div>
<div class="t" style="left:832.5px;top:765.6px;font-size:14.5px;line-height:19px;letter-spacing:-0.55px;color:#200000;">/</div>
<div style="left:1px;top:886px;width:1662px;height:26px;background:#f9f9f9"></div>
<div style="left:1px;top:888px;width:1662px;height:1px;background:#e2e2e2"></div>
<div class="t" style="left:7.7px;top:891.5px;font-size:15.6px;line-height:20px;letter-spacing:-0.95px;color:#111;">HPPAVW8-64</div>
<div class="t" style="left:147px;top:891.5px;font-size:15.6px;line-height:20px;letter-spacing:-0.91px;color:#111;">cmh (SDWHRPA)</div>
<div class="t" style="left:315px;top:891.5px;font-size:15.6px;line-height:20px;letter-spacing:-0.31px;color:#111;">prosadat.prw</div>
<div class="t" style="left:418.5px;top:891.5px;font-size:15.6px;line-height:20px;letter-spacing:-0.20px;color:#111;">winprosa.ini</div>
<div class="t" style="left:572px;top:891.5px;font-size:15.6px;line-height:20px;letter-spacing:-0.35px;color:#111;">987 - 01234567 - Demo-Gymnasium Stuttgart Stuttgart-Ost [Allgemein bildend. Gymnasium (BW) - RP Stuttgart]</div>
<div style="left:100px;top:891px;width:1px;height:19px;background:#d4d4d4"></div>
<div style="left:299.5px;top:891px;width:1px;height:19px;background:#d4d4d4"></div>
<div style="left:412px;top:891px;width:1px;height:19px;background:#d4d4d4"></div>
<div style="left:562.5px;top:891px;width:1px;height:19px;background:#d4d4d4"></div>
<svg style="left:1648px;top:898px" width="12" height="12" viewBox="0 0 12 12"><rect x="9" y="1" width="1.500" height="1.500" fill="#a8a8a8"/><rect x="6" y="4" width="1.500" height="1.500" fill="#a8a8a8"/><rect x="9" y="4" width="1.500" height="1.500" fill="#a8a8a8"/><rect x="3" y="7" width="1.500" height="1.500" fill="#a8a8a8"/><rect x="6" y="7" width="1.500" height="1.500" fill="#a8a8a8"/><rect x="9" y="7" width="1.500" height="1.500" fill="#a8a8a8"/><rect x="0" y="10" width="1.500" height="1.500" fill="#a8a8a8"/><rect x="3" y="10" width="1.500" height="1.500" fill="#a8a8a8"/><rect x="6" y="10" width="1.500" height="1.500" fill="#a8a8a8"/><rect x="9" y="10" width="1.500" height="1.500" fill="#a8a8a8"/></svg>
<!-- dialog -->
<div style="left:554px;top:237px;width:518px;height:424.5px;box-shadow:1px 3px 7px 2px rgba(0,0,0,0.24);background:rgba(0,0,0,0.2);border-radius:4px"></div>
<div style="left:553px;top:235px;width:518px;height:423.5px;background:#f9f9f9;border:1px solid #2b7cd3"></div>
<div style="left:1070px;top:274px;width:1px;height:383.5px;background:#e4e4e4"></div>
<div style="left:554px;top:236px;width:516px;height:38px;background:#f9f9f9"></div>
<svg style="left:564px;top:244px" width="20" height="20" viewBox="0 0 20 20"><rect x="0.500" y="0.500" width="19" height="19" fill="#cde8c2" stroke="#f04a62" stroke-width="1"/><path d="M3 3.800H9.500M6 3V16.500M3.500 6.200H8.500M5.500 9.500H14.500M9.800 8V12.500M11 12.800H16.500M14.500 11V17.500M4 13.500H8M14.500 15.500H17" stroke="#5aba5a" stroke-width="1.500" fill="none"/></svg>
<div class="t" style="left:589.7px;top:245.4px;font-size:15.6px;line-height:20px;letter-spacing:-0.27px;color:#1c1c1c;">Druckdialog (AbiAuswertung)</div>
<div style="left:922px;top:253px;width:12px;height:1.2px;background:#222"></div>
<div style="left:978.3px;top:248.3px;width:11.8px;height:11.5px;border:1.2px solid #222"></div>
<svg style="left:1035px;top:248px" width="12.5" height="12.5" viewBox="0 0 12.5 12.5"><path d="M0.500 0.500L12 12M12 0.500L0.500 12" stroke="#222" stroke-width="1.200" fill="none"/></svg>
<div style="left:554px;top:274px;width:515.5px;height:30.5px;background:#f9f9f9;border:1px solid #b4b4b4;border-left:none"></div>
<svg style="left:561.5px;top:281.2px" width="17.6" height="17.6" viewBox="0 0 17.6 17.6"><rect x="0.800" y="0.800" width="16" height="16" fill="#fff" stroke="#3a3a3a" stroke-width="1.600"/><path d="M3.300 7V3H5.200V5H3.300M4.600 5L5.500 7M7.200 3.200H10.400M8.800 3.200V7M12 3.500H14.500M12 5.800H14.500" stroke="#111" stroke-width="1.100" fill="none"/><path d="M2.800 10.300H14.800" stroke="#1414e0" stroke-width="1.900"/><path d="M4 10.300h1.800M8 10.300h1.800M12 10.300h1.800" stroke="#f01414" stroke-width="1.900"/><path d="M2.800 9H14.800" stroke="#111" stroke-width="0.700"/><path d="M2.800 14H14.800" stroke="#9a9a9a" stroke-width="1"/></svg>
<svg style="left:589.4px;top:279.8px" width="20" height="20.5" viewBox="0 0 20 20.5"><path d="M0.800 0.500V12.800H6" stroke="#c4c4c4" stroke-width="1.400" fill="none"/><path d="M3 3.500H9.500V8H3Z" fill="#c8ccd0"/><path d="M6.700 6H14.500L18.800 10.300V19.300H6.700Z" fill="#fff" stroke="#111" stroke-width="1.300"/><path d="M14.300 6.200V10.500H18.600" fill="none" stroke="#111" stroke-width="1"/><path d="M9 9.500H14V13H17V17.500H9Z" fill="#b8bcc0"/><path d="M5 12L8.500 11.500L9.500 14.500L12 12.500L10.500 17L7.500 18L6.500 15.500L4.800 14.500Z" fill="#18d8e8"/><path d="M8 13.500L9 16.500L10.500 13.500" stroke="#0a5a7a" stroke-width="0.800" fill="none"/><rect x="14.600" y="1.300" width="2.200" height="1.800" fill="#f000c8"/><rect x="16.900" y="1.300" width="1.400" height="1.800" fill="#111"/><path d="M10 1.500L13.500 4.500" stroke="#b0b0b0" stroke-width="1"/></svg>
<div style="left:617px;top:279px;width:1px;height:22px;background:#a8a8a8"></div>
<svg style="left:640px;top:280.1px" width="20.5" height="18.7" viewBox="0 0 20.5 18.7"><rect x="0.600" y="0.600" width="19.300" height="17.500" fill="#fff" stroke="#111" stroke-width="1.200"/><rect x="0" y="0" width="20.500" height="3.200" fill="#1414d8"/><rect x="8" y="0.800" width="4.500" height="1.400" fill="#9a9a9a"/><rect x="1.200" y="3.800" width="4" height="3" fill="#c8c8c8"/><path d="M5.45 3.200V18" stroke="#8a8a8a" stroke-width="1"/><path d="M10.3 3.200V18" stroke="#8a8a8a" stroke-width="1"/><path d="M15.15 3.200V18" stroke="#8a8a8a" stroke-width="1"/><path d="M0.600 7.05H19.900" stroke="#8a8a8a" stroke-width="1"/><path d="M0.600 10.7H19.900" stroke="#8a8a8a" stroke-width="1"/><path d="M0.600 14.35H19.900" stroke="#8a8a8a" stroke-width="1"/><rect x="1.4" y="7.65" width="1.900" height="1.900" fill="#f01020"/><rect x="1.4" y="11.3" width="1.900" height="1.900" fill="#f01020"/><rect x="1.4" y="14.95" width="1.900" height="1.900" fill="#f01020"/><rect x="6.25" y="4" width="1.900" height="1.900" fill="#f01020"/><rect x="6.25" y="7.65" width="1.900" height="1.900" fill="#f01020"/><rect x="6.25" y="11.3" width="1.900" height="1.900" fill="#f01020"/><rect x="6.25" y="14.95" width="1.900" height="1.900" fill="#f01020"/><rect x="11.1" y="4" width="1.900" height="1.900" fill="#f01020"/><rect x="11.1" y="7.65" width="1.900" height="1.900" fill="#f01020"/><rect x="11.1" y="11.3" width="1.900" height="1.900" fill="#f01020"/><rect x="11.1" y="14.95" width="1.900" height="1.900" fill="#f01020"/><rect x="15.95" y="4" width="1.900" height="1.900" fill="#f01020"/><rect x="15.95" y="7.65" width="1.900" height="1.900" fill="#f01020"/><rect x="15.95" y="11.3" width="1.900" height="1.900" fill="#f01020"/><rect x="15.95" y="14.95" width="1.900" height="1.900" fill="#f01020"/></svg>
<div style="left:559.4px;top:314.3px;width:350.3px;height:338px;border:1px solid #b0b0b8;background:#f9f9f9"></div>
<div class="t" style="left:569px;top:323.5px;font-size:14.5px;line-height:19px;letter-spacing:-0.52px;">Verwende diesen Drucker</div>
<div class="btn" style="left:569.2px;top:349px;width:329px;height:29.5px;"></div>
<div class="t" style="left:574.5px;top:353.5px;font-size:16.5px;line-height:21px;letter-spacing:-0.15px;">FinePrint</div>
<svg style="left:881.5px;top:361.5px" width="11" height="7" viewBox="0 0 11 7"><path d="M0.800 0.800L5.500 5.800L10.200 0.800" stroke="#555" stroke-width="1.300" fill="none"/></svg>
<div style="left:569.3px;top:425px;width:15.5px;height:15.5px;background:#f9f9f9;border:1px solid #c8c8c8"></div>
<div class="t" style="left:589.5px;top:423.5px;font-size:14.5px;line-height:19px;letter-spacing:-0.64px;color:#8a8a8a;">Querformat verwenden</div>
<div class="t" style="left:569.3px;top:452.5px;font-size:14.5px;line-height:19px;letter-spacing:-0.57px;color:#a0a0a8;">falls vom Drucker(treiber) unterstützt, können Sie hier</div>
<div class="t" style="left:569.3px;top:468.5px;font-size:14.5px;line-height:19px;letter-spacing:-0.55px;color:#a0a0a8;">Duplex wählen</div>
<div style="left:686.8px;top:471px;width:211.4px;height:25.3px;background:#d6d6d6;border:1px solid #c4c4c4"></div>
<div class="t" style="left:692px;top:474.5px;font-size:14.5px;line-height:19px;letter-spacing:-0.50px;color:#7a7a7a;">Druckereinstellung verwenden</div>
<svg style="left:881.5px;top:481px" width="11" height="7" viewBox="0 0 11 7"><path d="M0.800 0.800L5.500 5.800L10.200 0.800" stroke="#aaa" stroke-width="1.300" fill="none"/></svg>
<div class="t" style="left:569.3px;top:502.2px;font-size:14.5px;line-height:19px;letter-spacing:-0.79px;">Kommentardatei</div>
<div style="left:569.3px;top:526px;width:294px;height:25px;background:#d0d0d0;border:1px solid #b4b4b4;box-shadow:inset 0 0 0 1px #e8e8e8"></div>
<div class="t" style="left:573.5px;top:528.8px;font-size:14.5px;line-height:19px;letter-spacing:-0.53px;">- (noch) nicht vorgesehen -</div>
<div style="left:866px;top:526px;width:26px;height:25px;background:#d6d6d6;border:1px solid #b8b8b8"></div>
<div class="t" style="left:866px;top:530.5px;font-size:14.5px;line-height:19px;letter-spacing:0.50px;color:#555;width:26px;text-align:center;">...</div>
<div class="btn" style="left:570.3px;top:592.2px;width:225px;height:28px;"></div>
<svg style="left:577px;top:598.5px" width="16" height="16" viewBox="0 0 16 16"><path d="M1 1L15 15M15 1L1 15" stroke="#111" stroke-width="2.200" fill="none"/></svg>
<div class="t" style="left:600.6px;top:597.1px;font-size:14.5px;line-height:19px;letter-spacing:-0.66px;">Kommentardateiangabe löschen</div>
<div style="left:942.2px;top:315.4px;width:122.8px;height:28.8px;background:#e3dce3;border:2px solid #1a74d8"></div>
<div style="left:945.2px;top:318.4px;width:116.8px;height:22.8px;border:1px dotted #111"></div>
<svg style="left:951.8px;top:321.6px" width="20.5" height="18" viewBox="0 0 20.5 18"><path d="M6 0.700H16L14 6.500H4Z" fill="#fff" stroke="#111" stroke-width="1.100"/><path d="M7.200 2.500H14M6.500 4.500H13.300" stroke="#8a8a8a" stroke-width="1"/><path d="M3.500 6.500H15.500L19.800 8.300V13L17 15.200V9.800H0.800V9Z" fill="#9a9a9a" stroke="#111" stroke-width="1"/><path d="M0.700 9.600H16.800V16.300L15 17.500H2.500L0.700 16.300Z" fill="#e4e4e4" stroke="#111" stroke-width="1.200"/><path d="M1.200 12.300H16.500" stroke="#111" stroke-width="1.500"/><path d="M2 14.800H15.500" stroke="#7a7a7a" stroke-width="1.400"/><rect x="9.500" y="13.900" width="4.500" height="1.600" fill="#e8e000"/><path d="M17 9.800L19.800 8.300" stroke="#111" stroke-width="0.900"/><circle cx="18.300" cy="11.300" r="0.900" fill="#3a3a3a"/></svg>
<div class="t" style="left:977.7px;top:321.1px;font-size:14.5px;line-height:19px;letter-spacing:-0.64px;">OK (drucken)</div>
<div class="btn" style="left:942.2px;top:365.6px;width:122.8px;height:28px;"></div>
<div class="t" style="left:970.8px;top:371.1px;font-size:14.5px;line-height:19px;letter-spacing:-0.51px;">Abbrechen</div>
<div class="btn" style="left:942.2px;top:622.2px;width:122.5px;height:28px;"></div>
<div class="t" style="left:990px;top:627.2px;font-size:14.5px;line-height:19px;letter-spacing:-0.52px;">Hilfe</div>
</div></body></html>
